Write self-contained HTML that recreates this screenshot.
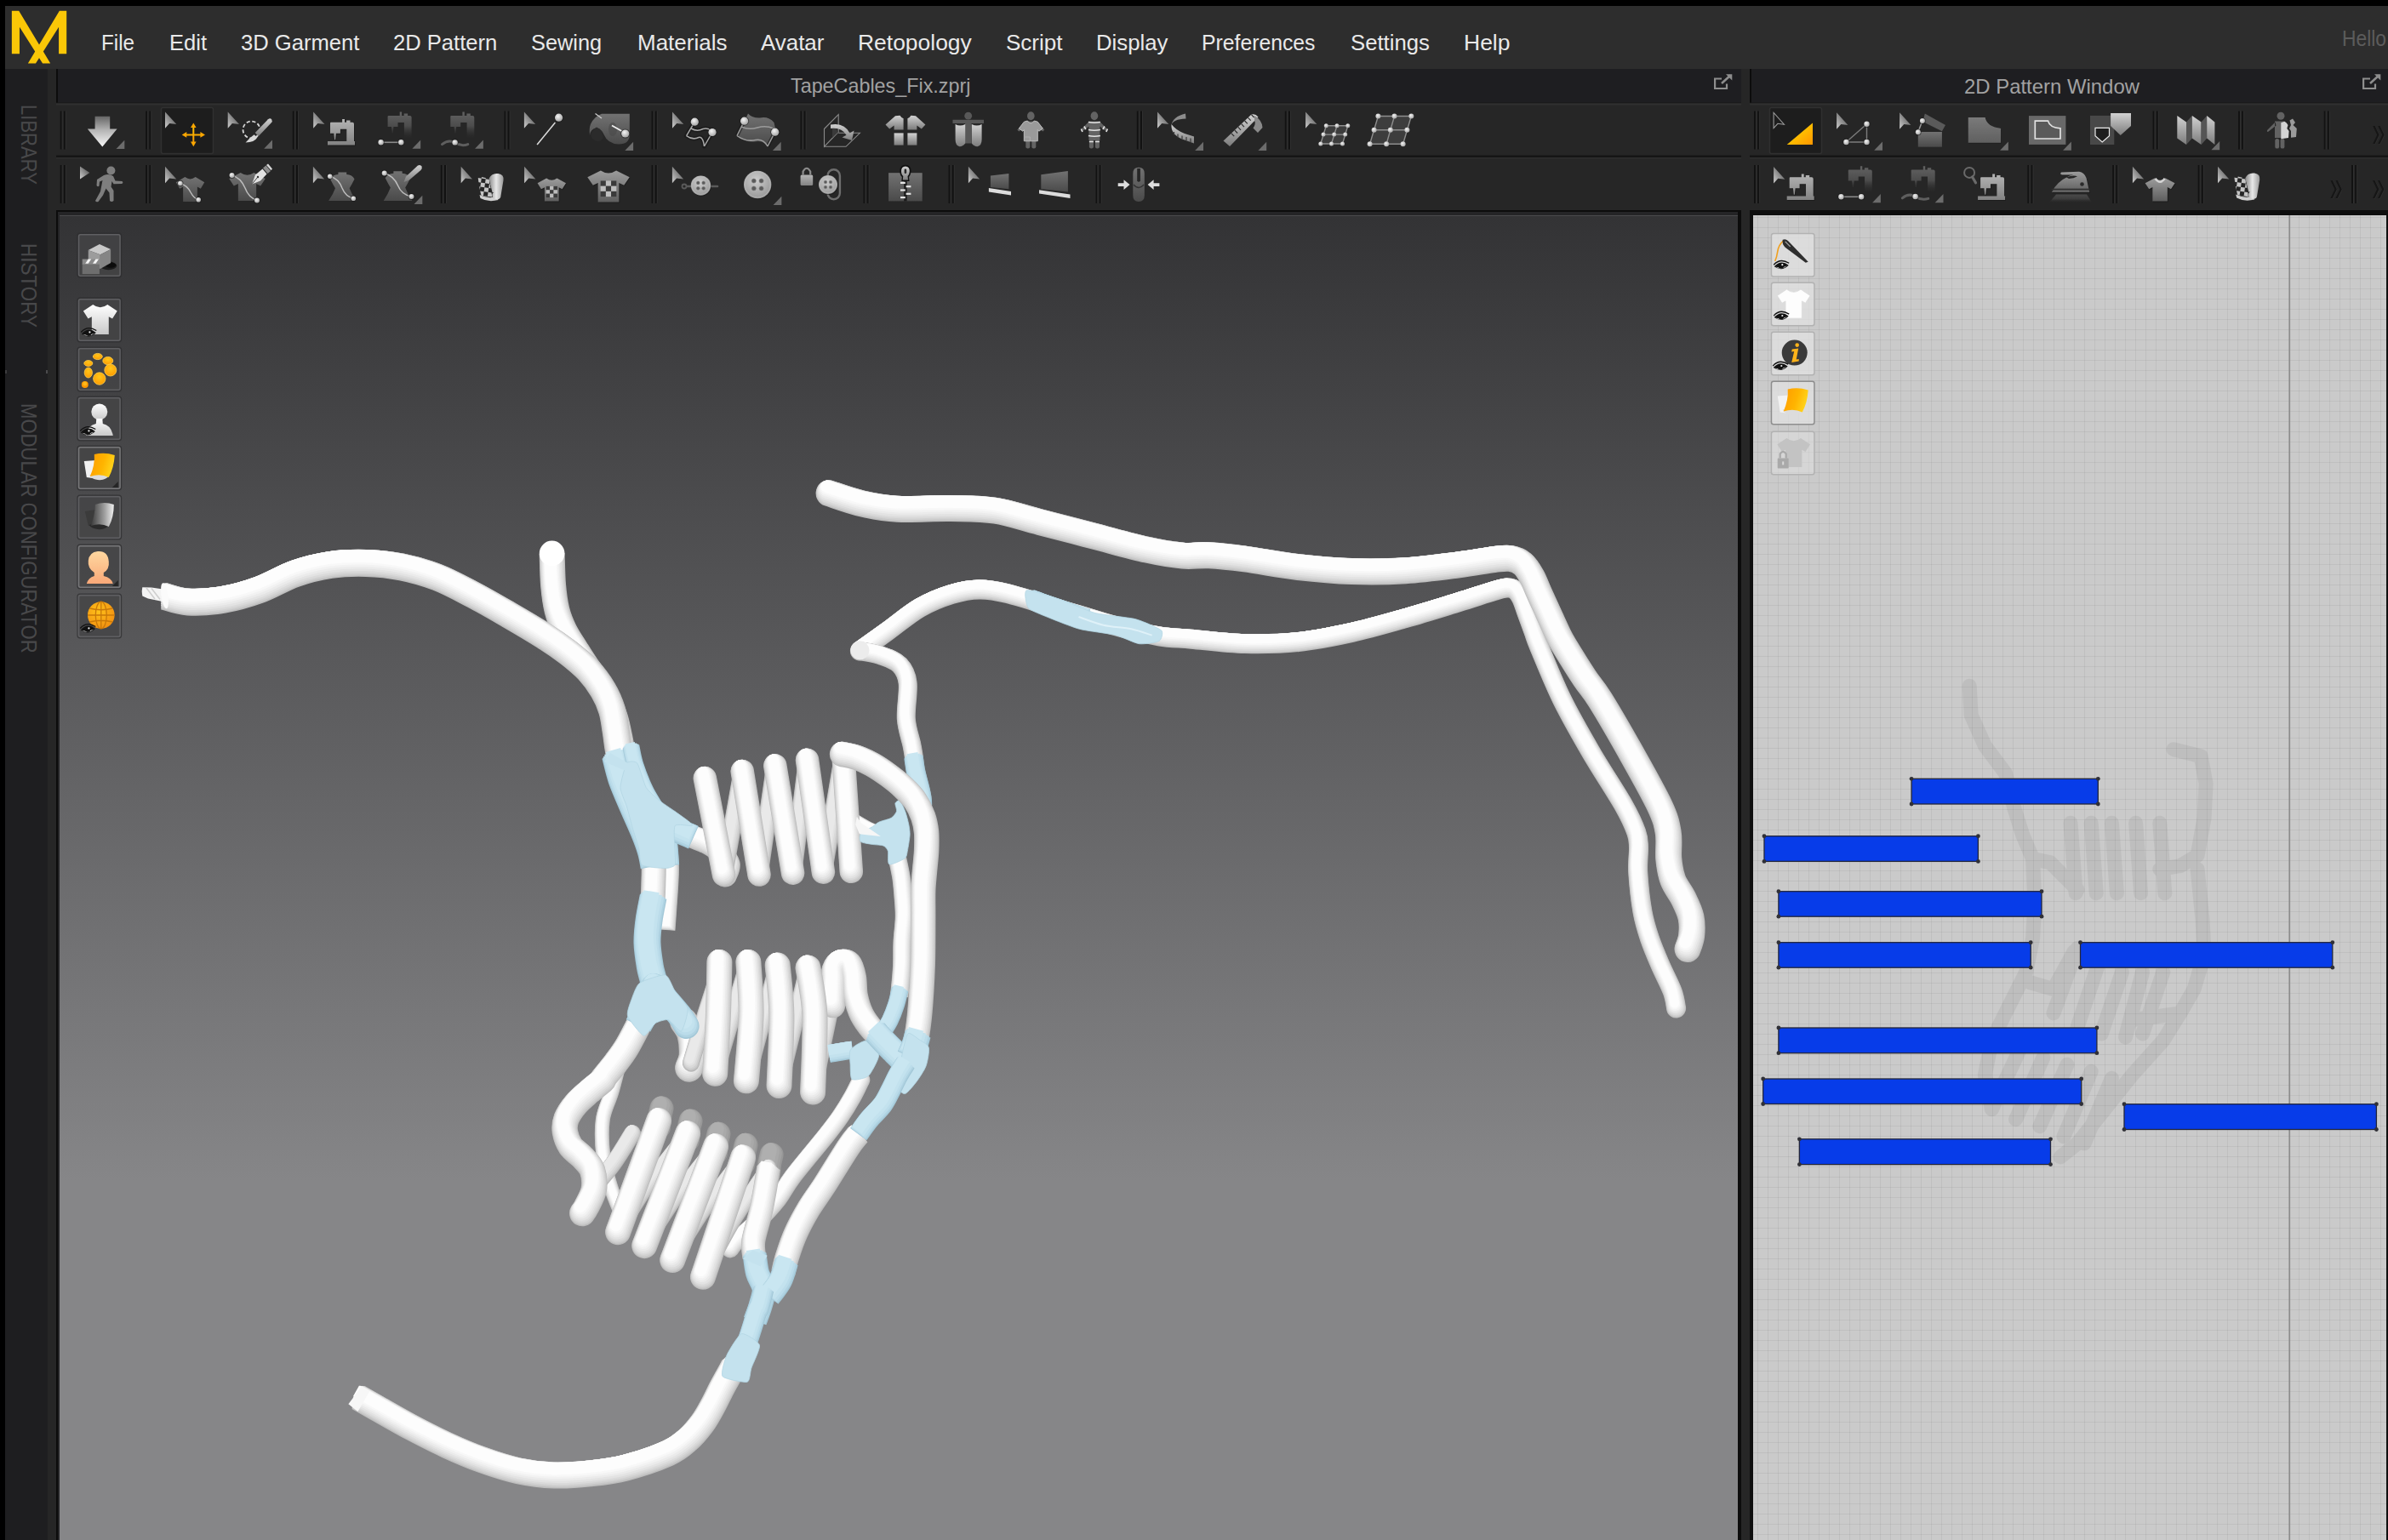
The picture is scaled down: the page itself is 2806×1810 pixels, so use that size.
<!DOCTYPE html>
<html>
<head>
<meta charset="utf-8">
<title>Marvelous Designer</title>
<style>
html,body{margin:0;padding:0;background:#000;}
body{width:2806px;height:1810px;position:relative;overflow:hidden;font-family:"Liberation Sans",sans-serif;}
.abs{position:absolute;}
#menubar{left:6px;top:7px;width:2800px;height:74px;background:#2d2d2d;}
#main{left:6px;top:81px;width:2800px;height:1729px;background:#262626;}
#sidebar{left:6px;top:81px;width:50px;height:1729px;background:#1e1e20;}
.title{background:#1e1e21;height:40px;top:81px;}
#title3d{left:66px;width:1980px;border-left:2px solid #0c0c0c;box-sizing:border-box;}
#title2d{left:2056px;width:750px;border-left:2px solid #0c0c0c;box-sizing:border-box;}
.tbline{height:2px;background:#141414;}
.tbhl{height:2px;background:#2e2e2e;}
.t{position:absolute;white-space:nowrap;transform-origin:0 0;line-height:1;}
.menu{color:#e9e9e9;font-size:25px;top:35px;}
.vt{color:#48484a;font-size:26px;transform-origin:0 0;}
#vp3d{left:66px;top:247px;width:1980px;height:1563px;background:#0c0c0c;}
#vp3dm{left:68px;top:249px;width:1974px;height:1561px;background:#242426;}
#vp3din{left:70px;top:253px;width:1972px;height:1557px;background:linear-gradient(180deg,#4a4a4c 0px,#4a4a4c 1.3px,#333335 1.4px,#868688 1136px,#868688 1557px);}
#vp2d{left:2056px;top:247px;width:750px;height:1563px;background:#0e0e0e;}
#vp2din{left:2060px;top:253px;width:744px;height:1557px;background-color:#cacaca;
 background-image:linear-gradient(90deg,rgba(0,0,0,0.055) 1px,transparent 1px),linear-gradient(180deg,rgba(0,0,0,0.055) 1px,transparent 1px);
 background-size:12px 12px;background-position:5px 2px;}
svg{position:absolute;left:0;top:0;}
</style>
</head>
<body>
<div class="abs" id="menubar"></div>
<div class="abs" id="main"></div>
<div class="abs" id="sidebar"></div>
<div class="abs title" id="title3d"></div>
<div class="abs title" id="title2d"></div>
<div class="abs" id="vp3d"></div>
<div class="abs" id="vp3dm"></div>
<div class="abs" id="vp3din"></div>
<div class="abs" id="vp2d"></div>
<div class="abs" id="vp2din"></div>

<!--TEXT-->
<div class="t menu" style="left:118.9px;top:37.5px;transform:scaleX(0.9702)">File</div>
<div class="t menu" style="left:198.7px;top:37.5px;transform:scaleX(1.0211)">Edit</div>
<div class="t menu" style="left:282.7px;top:37.5px;transform:scaleX(1.0230)">3D Garment</div>
<div class="t menu" style="left:461.7px;top:37.5px;transform:scaleX(1.0233)">2D Pattern</div>
<div class="t menu" style="left:624.2px;top:37.5px;transform:scaleX(1.0146)">Sewing</div>
<div class="t menu" style="left:748.6px;top:37.5px;transform:scaleX(1.0392)">Materials</div>
<div class="t menu" style="left:893.9px;top:37.5px;transform:scaleX(1.0361)">Avatar</div>
<div class="t menu" style="left:1008.2px;top:37.5px;transform:scaleX(1.0579)">Retopology</div>
<div class="t menu" style="left:1182.0px;top:37.5px;transform:scaleX(1.0407)">Script</div>
<div class="t menu" style="left:1288.0px;top:37.5px;transform:scaleX(1.0295)">Display</div>
<div class="t menu" style="left:1412.3px;top:37.5px;transform:scaleX(0.9904)">Preferences</div>
<div class="t menu" style="left:1586.5px;top:37.5px;transform:scaleX(1.0283)">Settings</div>
<div class="t menu" style="left:1720.0px;top:37.5px;transform:scaleX(1.0599)">Help</div>
<div class="t" style="left:2752.3px;top:32.8px;font-size:25px;color:#5c5c5c;transform:scaleX(0.9126)">Hello</div>
<div class="t" style="left:929.3px;top:89.3px;font-size:24px;color:#a2a2a2;transform:scaleX(0.9722)">TapeCables_Fix.zprj</div>
<div class="t" style="left:2307.6px;top:89.8px;font-size:24px;color:#a2a2a2;transform:scaleX(0.9963)">2D Pattern Window</div>
<div class="t vt" style="left:46.8px;top:122.5px;transform:rotate(90deg) scaleX(0.8484)">LIBRARY</div>
<div class="t vt" style="left:46.8px;top:286.2px;transform:rotate(90deg) scaleX(0.8627)">HISTORY</div>
<div class="t vt" style="left:46.8px;top:474.3px;transform:rotate(90deg) scaleX(0.8495)">MODULAR CONFIGURATOR</div>
<!--/TEXT-->

<svg id="ov" width="2806" height="1810" viewBox="0 0 2806 1810">
<defs>
<linearGradient id="gIco" x1="0" y1="0" x2="0" y2="1"><stop offset="0" stop-color="#5a5a5a"/><stop offset="1" stop-color="#b8b8b8"/></linearGradient>
</defs>
<!--CHROME-->
<rect x="66" y="120.5" width="1980" height="1" fill="#171717" />
<rect x="66" y="121.5" width="1980" height="2" fill="#303030" />
<rect x="66" y="182.5" width="1980" height="2.5" fill="#151515" />
<rect x="66" y="185" width="1980" height="1.5" fill="#2e2e2e" />
<rect x="2056" y="120.5" width="750" height="1" fill="#171717" />
<rect x="2056" y="121.5" width="750" height="2" fill="#303030" />
<rect x="2056" y="182.5" width="750" height="2.5" fill="#151515" />
<rect x="2056" y="185" width="750" height="1.5" fill="#2e2e2e" />
<rect x="70.7" y="130.5" width="2" height="45.0" fill="#121212" />
<rect x="72.7" y="130.5" width="1" height="45.0" fill="#303030" />
<rect x="74.9" y="130.5" width="2" height="45.0" fill="#121212" />
<rect x="76.9" y="130.5" width="1" height="45.0" fill="#303030" />
<rect x="171.2" y="130.5" width="2" height="45.0" fill="#121212" />
<rect x="173.2" y="130.5" width="1" height="45.0" fill="#303030" />
<rect x="175.39999999999998" y="130.5" width="2" height="45.0" fill="#121212" />
<rect x="177.39999999999998" y="130.5" width="1" height="45.0" fill="#303030" />
<rect x="343.8" y="130.5" width="2" height="45.0" fill="#121212" />
<rect x="345.8" y="130.5" width="1" height="45.0" fill="#303030" />
<rect x="348.0" y="130.5" width="2" height="45.0" fill="#121212" />
<rect x="350.0" y="130.5" width="1" height="45.0" fill="#303030" />
<rect x="592.5" y="130.5" width="2" height="45.0" fill="#121212" />
<rect x="594.5" y="130.5" width="1" height="45.0" fill="#303030" />
<rect x="596.7" y="130.5" width="2" height="45.0" fill="#121212" />
<rect x="598.7" y="130.5" width="1" height="45.0" fill="#303030" />
<rect x="765.6" y="130.5" width="2" height="45.0" fill="#121212" />
<rect x="767.6" y="130.5" width="1" height="45.0" fill="#303030" />
<rect x="769.8000000000001" y="130.5" width="2" height="45.0" fill="#121212" />
<rect x="771.8000000000001" y="130.5" width="1" height="45.0" fill="#303030" />
<rect x="940.5" y="130.5" width="2" height="45.0" fill="#121212" />
<rect x="942.5" y="130.5" width="1" height="45.0" fill="#303030" />
<rect x="944.7" y="130.5" width="2" height="45.0" fill="#121212" />
<rect x="946.7" y="130.5" width="1" height="45.0" fill="#303030" />
<rect x="1335.8" y="130.5" width="2" height="45.0" fill="#121212" />
<rect x="1337.8" y="130.5" width="1" height="45.0" fill="#303030" />
<rect x="1340.0" y="130.5" width="2" height="45.0" fill="#121212" />
<rect x="1342.0" y="130.5" width="1" height="45.0" fill="#303030" />
<rect x="1509.8" y="130.5" width="2" height="45.0" fill="#121212" />
<rect x="1511.8" y="130.5" width="1" height="45.0" fill="#303030" />
<rect x="1514.0" y="130.5" width="2" height="45.0" fill="#121212" />
<rect x="1516.0" y="130.5" width="1" height="45.0" fill="#303030" />
<rect x="70.7" y="194" width="2" height="45" fill="#121212" />
<rect x="72.7" y="194" width="1" height="45" fill="#303030" />
<rect x="74.9" y="194" width="2" height="45" fill="#121212" />
<rect x="76.9" y="194" width="1" height="45" fill="#303030" />
<rect x="171.2" y="194" width="2" height="45" fill="#121212" />
<rect x="173.2" y="194" width="1" height="45" fill="#303030" />
<rect x="175.39999999999998" y="194" width="2" height="45" fill="#121212" />
<rect x="177.39999999999998" y="194" width="1" height="45" fill="#303030" />
<rect x="343.8" y="194" width="2" height="45" fill="#121212" />
<rect x="345.8" y="194" width="1" height="45" fill="#303030" />
<rect x="348.0" y="194" width="2" height="45" fill="#121212" />
<rect x="350.0" y="194" width="1" height="45" fill="#303030" />
<rect x="517.8" y="194" width="2" height="45" fill="#121212" />
<rect x="519.8" y="194" width="1" height="45" fill="#303030" />
<rect x="522.0" y="194" width="2" height="45" fill="#121212" />
<rect x="524.0" y="194" width="1" height="45" fill="#303030" />
<rect x="765.6" y="194" width="2" height="45" fill="#121212" />
<rect x="767.6" y="194" width="1" height="45" fill="#303030" />
<rect x="769.8000000000001" y="194" width="2" height="45" fill="#121212" />
<rect x="771.8000000000001" y="194" width="1" height="45" fill="#303030" />
<rect x="1014.5" y="194" width="2" height="45" fill="#121212" />
<rect x="1016.5" y="194" width="1" height="45" fill="#303030" />
<rect x="1018.7" y="194" width="2" height="45" fill="#121212" />
<rect x="1020.7" y="194" width="1" height="45" fill="#303030" />
<rect x="1114.6" y="194" width="2" height="45" fill="#121212" />
<rect x="1116.6" y="194" width="1" height="45" fill="#303030" />
<rect x="1118.8" y="194" width="2" height="45" fill="#121212" />
<rect x="1120.8" y="194" width="1" height="45" fill="#303030" />
<rect x="1287.5" y="194" width="2" height="45" fill="#121212" />
<rect x="1289.5" y="194" width="1" height="45" fill="#303030" />
<rect x="1291.7" y="194" width="2" height="45" fill="#121212" />
<rect x="1293.7" y="194" width="1" height="45" fill="#303030" />
<rect x="2061" y="130.5" width="2" height="45.0" fill="#121212" />
<rect x="2063" y="130.5" width="1" height="45.0" fill="#303030" />
<rect x="2065.2" y="130.5" width="2" height="45.0" fill="#121212" />
<rect x="2067.2" y="130.5" width="1" height="45.0" fill="#303030" />
<rect x="2529.6" y="130.5" width="2" height="45.0" fill="#121212" />
<rect x="2531.6" y="130.5" width="1" height="45.0" fill="#303030" />
<rect x="2533.7999999999997" y="130.5" width="2" height="45.0" fill="#121212" />
<rect x="2535.7999999999997" y="130.5" width="1" height="45.0" fill="#303030" />
<rect x="2630" y="130.5" width="2" height="45.0" fill="#121212" />
<rect x="2632" y="130.5" width="1" height="45.0" fill="#303030" />
<rect x="2634.2" y="130.5" width="2" height="45.0" fill="#121212" />
<rect x="2636.2" y="130.5" width="1" height="45.0" fill="#303030" />
<rect x="2730.7" y="130.5" width="2" height="45.0" fill="#121212" />
<rect x="2732.7" y="130.5" width="1" height="45.0" fill="#303030" />
<rect x="2734.8999999999996" y="130.5" width="2" height="45.0" fill="#121212" />
<rect x="2736.8999999999996" y="130.5" width="1" height="45.0" fill="#303030" />
<rect x="2061" y="194" width="2" height="45" fill="#121212" />
<rect x="2063" y="194" width="1" height="45" fill="#303030" />
<rect x="2065.2" y="194" width="2" height="45" fill="#121212" />
<rect x="2067.2" y="194" width="1" height="45" fill="#303030" />
<rect x="2382.4" y="194" width="2" height="45" fill="#121212" />
<rect x="2384.4" y="194" width="1" height="45" fill="#303030" />
<rect x="2386.6" y="194" width="2" height="45" fill="#121212" />
<rect x="2388.6" y="194" width="1" height="45" fill="#303030" />
<rect x="2482.2" y="194" width="2" height="45" fill="#121212" />
<rect x="2484.2" y="194" width="1" height="45" fill="#303030" />
<rect x="2486.3999999999996" y="194" width="2" height="45" fill="#121212" />
<rect x="2488.3999999999996" y="194" width="1" height="45" fill="#303030" />
<rect x="2582.7" y="194" width="2" height="45" fill="#121212" />
<rect x="2584.7" y="194" width="1" height="45" fill="#303030" />
<rect x="2586.8999999999996" y="194" width="2" height="45" fill="#121212" />
<rect x="2588.8999999999996" y="194" width="1" height="45" fill="#303030" />
<rect x="2763" y="194" width="2" height="45" fill="#121212" />
<rect x="2765" y="194" width="1" height="45" fill="#303030" />
<rect x="2767.2" y="194" width="2" height="45" fill="#121212" />
<rect x="2769.2" y="194" width="1" height="45" fill="#303030" />
<rect x="189.5" y="126.5" width="61" height="54" rx="2" fill="#1d1d1d" stroke="#303030" stroke-width="1.5"/>
<rect x="2079.5" y="126.5" width="61" height="54" rx="2" fill="#1d1d1d" stroke="#303030" stroke-width="1.5"/>
<rect x="6" y="435" width="2" height="4" fill="#3c3c3e" />
<rect x="54" y="435" width="2" height="4" fill="#4a4a4c" />
<!--/CHROME-->
<!--LOGO--><path fill="#fbc707" d="M13.85,12.83 L22.2,12.83 L59.2,74.6 L50.07,74.6 L22.97,31.8 L22.97,63.2 L13.85,63.2Z"/><path fill="#fbc707" d="M78.2,12.83 L69.83,12.83 L32.85,74.6 L41.97,74.6 L69.07,31.8 L69.07,63.2 L78.2,63.2Z"/><g id="pop" fill="none" stroke="#8e8e8e" stroke-width="2.2"><path d="M2785,92.5 L2777.1,92.5 L2777.1,104 L2791,104 L2791,98.5"/><path d="M2785,98 L2795.5,88.5" stroke-width="2.6"/><path d="M2790,87.3 L2797.3,87.3 L2797.3,94.6Z" fill="#8e8e8e" stroke="none"/></g><use href="#pop" transform="translate(-762,0)"/><!--/LOGO-->
<!--ICONS3D-->
<defs>
<linearGradient id="gCur" x1="0" y1="1" x2="0.9" y2="0.1"><stop offset="0" stop-color="#cfcfcf"/><stop offset="0.55" stop-color="#8a8a8a"/><stop offset="1" stop-color="#4c4c4c"/></linearGradient>
<linearGradient id="gL" x1="0" y1="0" x2="0" y2="1"><stop offset="0" stop-color="#b4b4b4"/><stop offset="1" stop-color="#828282"/></linearGradient>
<linearGradient id="gL2" x1="0" y1="0" x2="0" y2="1"><stop offset="0" stop-color="#d2d2d2"/><stop offset="1" stop-color="#7c7c7c"/></linearGradient>
<linearGradient id="gD" x1="0" y1="0" x2="0" y2="1"><stop offset="0" stop-color="#727272"/><stop offset="1" stop-color="#4a4a4a"/></linearGradient>
<linearGradient id="gDf" x1="0" y1="0" x2="0" y2="1"><stop offset="0" stop-color="#626262"/><stop offset="0.55" stop-color="#4c4c4c"/><stop offset="1" stop-color="#2a2a2a" stop-opacity="0.2"/></linearGradient>
<linearGradient id="gArr" x1="0" y1="0" x2="0" y2="1"><stop offset="0" stop-color="#666"/><stop offset="0.45" stop-color="#b4b4b4"/><stop offset="1" stop-color="#f8f8f8"/></linearGradient>
<linearGradient id="gM" x1="0" y1="0" x2="0" y2="1"><stop offset="0" stop-color="#9c9c9c"/><stop offset="1" stop-color="#5e5e5e"/></linearGradient>
<radialGradient id="gBtn" cx="0.45" cy="0.35" r="0.8"><stop offset="0" stop-color="#cdcdcd"/><stop offset="1" stop-color="#8c8c8c"/></radialGradient>
<radialGradient id="gBall" cx="0.4" cy="0.35" r="0.75"><stop offset="0" stop-color="#f4f4f4"/><stop offset="1" stop-color="#9c9c9c"/></radialGradient>
<linearGradient id="gYel" x1="0.2" y1="0.2" x2="1" y2="1"><stop offset="0" stop-color="#ffd500"/><stop offset="1" stop-color="#ff9600"/></linearGradient>
<linearGradient id="gMv" x1="0" y1="0" x2="0" y2="1"><stop offset="0" stop-color="#ffc400"/><stop offset="1" stop-color="#f79400"/></linearGradient>
<linearGradient id="gRoll" x1="0" y1="0" x2="1" y2="0"><stop offset="0" stop-color="#8a8a8a"/><stop offset="0.5" stop-color="#e8e8e8"/><stop offset="1" stop-color="#9a9a9a"/></linearGradient>
<pattern id="chk" width="10" height="10" patternUnits="userSpaceOnUse" patternTransform="rotate(8)"><rect width="10" height="10" fill="#c4c4c4"/><rect width="5" height="5" fill="#262626"/><rect x="5" y="5" width="5" height="5" fill="#262626"/></pattern>
<pattern id="chk2" width="9" height="9" patternUnits="userSpaceOnUse"><rect width="9" height="9" fill="#b8b8b8"/><rect width="4.5" height="4.5" fill="#484848"/><rect x="4.5" y="4.5" width="4.5" height="4.5" fill="#484848"/></pattern>
<path id="cur" d="M0,0 L0,19.4 L5.2,13.7 L13.3,14.7Z" fill="url(#gCur)"/>
<path id="tri" d="M0,-10.2 L0,0 L-9.8,0Z" fill="#6c6c6c"/>
<path id="sm" d="M1.5,0 H26.5 Q28.5,0 28.5,2 V22.3 H29.5 V26.8 H-2.5 V22.3 H19.8 V8 H12.4 V13 H7.4 L6.6,20.5 H5.6 L4.8,13 H0.5 V1 Q0.5,0 1.5,0Z M14.6,-3.8 h2.9 v3.8 h-2.9Z M19.6,-2.3 h4.4 v2.3 h-4.4Z"/>
<path id="smd" d="M1.5,0 H26.5 Q28.5,0 28.5,2 V26 H19.8 V8 H12.4 V13 H7.4 L6.6,20.5 H5.6 L4.8,13 H0.5 V1 Q0.5,0 1.5,0Z M14.6,-4.3 h2.4 v4.3 h-2.4Z M19.6,-2.3 h4.4 v2.3 h-4.4Z" fill="url(#gDf)"/>
<path id="tee2" d="M-7,-17 Q0,-11.5 7,-17 L19,-10 L14,-1.5 L9.5,-4 L9.5,16 L-9.5,16 L-9.5,-4 L-14,-1.5 L-19,-10Z"/>
<path id="chev" d="M0,0 L2.4,0 L7.4,10.5 L2.4,21 L0,21 L5,10.5Z"/>
</defs>
<path d="M111.6,136.8 H129.2 V151.4 H137.6 L120.3,172.6 L102.8,151.4 H111.6Z" fill="url(#gArr)"/>
<use href="#tri" x="146.3" y="174.9"/>
<use href="#cur" x="194" y="131.4"/>
<g stroke="url(#gMv)" stroke-width="2" fill="url(#gMv)"><path d="M227.3,148 V169 M217,158.4 H237.6" /><path d="M227.3,144.4 L230.6,150 H224Z M227.3,172.2 L230.6,166.6 H224Z M213.7,158.4 L219.3,155.1 V161.7Z M241,158.4 L235.4,155.1 V161.7Z" stroke="none" fill="#f9a602"/></g>
<use href="#cur" x="267.7" y="131.4"/>
<circle cx="295.5" cy="152.5" r="10" fill="none" stroke="#d8d8d8" stroke-width="1.8" stroke-dasharray="4.2 2.6"/>
<path d="M299.8,156 L315,140.2 Q317.6,138.4 319.2,140.4 Q320.6,142.4 318.6,144.6 L303.6,160.2Z" fill="url(#gL2)"/><path d="M298.6,158.2 L302.4,161.6 Q299,167.4 288.6,167.6 Q293.2,161.8 298.6,158.2Z" fill="#d6d6d6"/>
<use href="#tri" x="320" y="174.8"/>
<use href="#cur" x="368.2" y="131.4"/>
<use href="#sm" x="388.3" y="144.7" fill="#111" opacity="0.5"/><use href="#sm" x="387.5" y="143.7" fill="url(#gL)"/>
<use href="#smd" x="455.1" y="135.9"/>
<path d="M447.6,167.3 H471.3" stroke="#8a8a8a" stroke-width="1.6"/>
<circle cx="447.6" cy="167.3" r="4.1000000000000005" fill="#151515" opacity="0.55"/><circle cx="447.6" cy="167.3" r="3.2" fill="url(#gBall)"/>
<circle cx="471.3" cy="167.3" r="4.1000000000000005" fill="#151515" opacity="0.55"/><circle cx="471.3" cy="167.3" r="3.2" fill="url(#gBall)"/>
<use href="#tri" x="494.2" y="174.8"/>
<use href="#smd" x="528.8" y="135.9"/>
<path d="M519.5,169.6 Q527,163.5 534.6,167.6 Q542,172.5 549.8,169.6" stroke="#5e5e5e" stroke-width="3" fill="none" stroke-linecap="round"/>
<circle cx="534.6" cy="167.4" r="4.1000000000000005" fill="#151515" opacity="0.55"/><circle cx="534.6" cy="167.4" r="3.2" fill="url(#gBall)"/>
<use href="#tri" x="567.9" y="174.8"/>
<use href="#cur" x="615.9" y="131.4"/>
<path d="M652.4,144 L631.1,170" stroke="#dcdcdc" stroke-width="1.5"/>
<circle cx="656.6" cy="138.2" r="5.5" fill="#151515" opacity="0.55"/><circle cx="656.6" cy="138.2" r="4.6" fill="url(#gBall)"/>
<path d="M707,133.8 H739.8 V158 Q739.8,169.5 727,169.5 Q714,169 709.5,158 Q706,150 700,150.5 Q694,151.5 693,159 Q692,151 694,146 Q698,137 707,133.8Z" fill="url(#gD)"/><path d="M701,149.5 Q708,152 709,162 Q703,170 696,163 Q691,157 701,149.5Z" fill="#2b2b2b"/><ellipse cx="720" cy="152" rx="5" ry="8" fill="#4a4a4a" opacity="0.6"/>
<path d="M699.5,133.5 L707,139" stroke="#cfcfcf" stroke-width="1.2"/><path d="M719,147.5 L730.5,154" stroke="#f0f0f0" stroke-width="1.8"/>
<circle cx="734.7" cy="157" r="5.5" fill="#151515" opacity="0.55"/><circle cx="734.7" cy="157" r="4.6" fill="url(#gBall)"/>
<use href="#tri" x="744.1" y="176.9"/>
<use href="#cur" x="790" y="131.4"/>
<g fill="none" stroke="#151515" stroke-width="5" stroke-linecap="round" opacity="0.6"><path d="M816.3,143.2 L806.6,159.6 M837,155.5 L827.5,172 M812,151 Q819,155 826,151.5 Q831,150 835,153 M806.6,159.6 Q814,165 821,161.5 Q826,160 827.5,172"/></g>
<g fill="none" stroke="#a8a8a8" stroke-width="1.5"><path d="M816.3,143.2 L806.6,159.6 M837,155.5 L827.5,172 M812,151 Q819,155 826,151.5 Q831,150 835,153 M806.6,159.6 Q814,165 821,161.5 Q826,160 827.5,172"/></g>
<circle cx="816.3" cy="143.2" r="5.5" fill="#151515" opacity="0.55"/><circle cx="816.3" cy="143.2" r="4.6" fill="url(#gBall)"/>
<circle cx="837" cy="155.5" r="5.5" fill="#151515" opacity="0.55"/><circle cx="837" cy="155.5" r="4.6" fill="url(#gBall)"/>
<path d="M879,133.5 Q884,139 893,138.5 Q903,136.5 909.5,144 L912,155 L902,172 Q897,165 888,166.5 Q876,168 866,159.5 L874.6,143Z" fill="url(#gD)"/>
<g fill="none" stroke="#151515" stroke-width="4.5" opacity="0.55"><path d="M874.6,142.2 L866,159.5 M910.7,155.2 L902,172"/></g>
<g fill="none" stroke="#9c9c9c" stroke-width="1.5"><path d="M874.6,142.2 L866,159.5 M910.7,155.2 L902,172 M871,149 Q880,153 890,150 Q900,147 909,151 M866,159.5 Q876,167 888,164.5 Q897,163 902,172"/></g>
<circle cx="874.6" cy="142.2" r="5.5" fill="#151515" opacity="0.55"/><circle cx="874.6" cy="142.2" r="4.6" fill="url(#gBall)"/>
<circle cx="910.7" cy="155.2" r="5.5" fill="#151515" opacity="0.55"/><circle cx="910.7" cy="155.2" r="4.6" fill="url(#gBall)"/>
<use href="#tri" x="917.7" y="176.9"/>
<g fill="none" stroke="#8a8a8a" stroke-width="1.1"><path d="M968.5,151.5 L985.2,134.6 V155 L968.5,172.3Z M968.5,172.3 H994 L1010.4,156.3 H985.2"/></g><path d="M985.2,155 L978,162 V147 Z" fill="#3a3a3a"/>
<path d="M976,146.5 Q992,143.5 998.5,156.5 L1003.5,153.5 L1001,165 L989.5,161.5 L994.5,158.7 Q989,149.5 976,151Z" fill="url(#gL2)"/>
<g fill="url(#gL2)"><path d="M1057.5,135.8 Q1059,138.5 1061.6,139.2 V152.4 H1050.6 V147.6 L1045.2,151.6 L1040.5,146.6 L1052,136.2Z"/><path d="M1070.4,135.8 Q1069,138.5 1066.4,139.2 V152.4 H1077.4 V147.6 L1082.8,151.6 L1087.4,146.6 L1076,136.2Z"/><rect x="1050.6" y="156.4" width="11" height="14.2"/><rect x="1066.4" y="156.4" width="11" height="14.2"/></g>
<g fill="#585858"><circle cx="1137.7" cy="136.2" r="4.4"/><path d="M1119.5,140.7 H1156 V145 H1141.5 V168.5 H1134 V145 H1119.5Z"/></g>
<path d="M1122.6,146 Q1128,149 1134.2,146 V168.5 Q1131,172.5 1127.5,172.3 Q1122.6,171 1122.6,164Z" fill="url(#gL2)"/><path d="M1153.6,146 Q1148,149 1141.8,146 V168.5 Q1145,172.5 1148.5,172.3 Q1153.6,171 1153.6,164Z" fill="url(#gL2)"/>
<g fill="#636363"><ellipse cx="1211.3" cy="136.3" rx="4.3" ry="5"/><path d="M1205.3,142.5 H1217.3 L1227.3,152.5 L1225.3,154.5 L1217.8,148.5 V165 H1204.8 V148.5 L1197.3,154.5 L1195.3,152.5Z"/><rect x="1205.3" y="164" width="5" height="10.5" rx="2.2"/><rect x="1212.3" y="164" width="5" height="10.5" rx="2.2"/></g>
<path d="M1207.3,142 Q1211.3,147.5 1215.3,142 L1219.3,143.2 L1225.3,151 L1220.8,154.2 L1219.3,152.5 V165.8 H1203.3 V152.5 L1201.8,154.2 L1197.3,151 L1203.3,143.2Z" fill="#9a9a9a" stroke="#c6c6c6" stroke-width="0.9"/><path d="M1204.3,161 H1210.3 V165.5" fill="none" stroke="#b8b8b8" stroke-width="0.7"/>
<g fill="#636363"><ellipse cx="1285.9" cy="136.3" rx="4.3" ry="5"/><path d="M1279.9,142.5 H1291.9 L1301.9,152.5 L1299.9,154.5 L1292.4,148.5 V165 H1279.4 V148.5 L1271.9,154.5 L1269.9,152.5Z"/><rect x="1279.9" y="164" width="5" height="10.5" rx="2.2"/><rect x="1286.9" y="164" width="5" height="10.5" rx="2.2"/></g>
<path d="M1278.9,143.5 Q1285.9,145.1 1292.9,143.5" stroke="#e4e4e4" stroke-width="1.6" fill="none"/><path d="M1278.9,152.5 Q1285.9,154.1 1292.9,152.5" stroke="#e4e4e4" stroke-width="1.6" fill="none"/><path d="M1278.9,159.5 Q1285.9,161.1 1292.9,159.5" stroke="#e4e4e4" stroke-width="1.6" fill="none"/><path d="M1273.9,148.5 L1275.9,152 M1297.9,148.5 L1295.9,152 M1270.4,151.5 L1271.9,155 M1301.4,151.5 L1299.9,155 M1279.9,166.5 H1284.9 M1286.9,166.5 H1291.9" stroke="#e4e4e4" stroke-width="1.6" fill="none"/>
<use href="#cur" x="1360" y="131.4"/>
<path d="M1393,133.5 Q1378,137 1376.5,147 Q1378,140 1393.5,139.5Z" fill="#8c8c8c"/><path d="M1376.5,146 Q1375.5,158 1389,163.5 L1403,168.5 V160.5 L1392,157 Q1381,152.5 1376.5,146Z" fill="url(#gL2)"/><path d="M1379.5,155 v3.5 M1384,157.5 v4 M1389,159.5 v4 M1394,161 v4 M1399,162.5 v4.5" stroke="#3a3a3a" stroke-width="1.2"/>
<use href="#tri" x="1414" y="176.9"/>
<path d="M1437.5,165.5 L1470.5,134.5 Q1475,133 1478.5,137.5 L1445,172Z" fill="url(#gL2)"/><path d="M1474,136 Q1483,141 1483.5,150 L1478,156 L1472.5,150.5 Q1476,146 1474,141.5Z" fill="#8a8a8a"/>
<g stroke="#2c2c2c" stroke-width="1.2"><path d="M1447.0,156.8 l3.2,3.4"/><path d="M1450.9,153.1 l3.2,3.4"/><path d="M1454.8,149.4 l3.2,3.4"/><path d="M1458.7,145.7 l3.2,3.4"/><path d="M1462.6,142.0 l3.2,3.4"/><path d="M1466.5,138.3 l3.2,3.4"/><path d="M1470.4,134.6 l3.2,3.4"/></g>
<use href="#tri" x="1488.2" y="176.9"/>
<use href="#cur" x="1534.1" y="131.4"/>
<path d="M1558.3,147.7 L1583.8,147.7 L1577.5,169 L1551.8,169Z" fill="#3d3d3d"/>
<path d="M1558.3,147.7 L1583.8,147.7 M1558.3,147.7 L1551.8,169 M1555,158.1 L1580.7,158.1 M1571,147.7 L1564.5,169 M1551.8,169 L1577.5,169 M1583.8,147.7 L1577.5,169 " stroke="#8e8e8e" stroke-width="1.4" fill="none"/>
<circle cx="1558.3" cy="147.7" r="2.5" fill="url(#gBall)"/>
<circle cx="1571" cy="147.7" r="2.5" fill="url(#gBall)"/>
<circle cx="1583.8" cy="147.7" r="2.5" fill="url(#gBall)"/>
<circle cx="1555" cy="158.1" r="2.5" fill="url(#gBall)"/>
<circle cx="1567.7" cy="158.1" r="2.5" fill="url(#gBall)"/>
<circle cx="1580.7" cy="158.1" r="2.5" fill="url(#gBall)"/>
<circle cx="1551.8" cy="169" r="2.5" fill="url(#gBall)"/>
<circle cx="1564.5" cy="169" r="2.5" fill="url(#gBall)"/>
<circle cx="1577.5" cy="169" r="2.5" fill="url(#gBall)"/>
<path d="M1619.4,136.5 L1658.3,136.5 L1648.6,169.3 L1609.6,169.3Z" fill="#3d3d3d"/>
<path d="M1619.4,136.5 L1658.3,136.5 M1619.4,136.5 L1609.6,169.3 M1614.6,152.8 L1653.4,152.8 M1638.5,136.5 L1629.1,169.3 M1609.6,169.3 L1648.6,169.3 M1658.3,136.5 L1648.6,169.3 " stroke="#8e8e8e" stroke-width="1.4" fill="none"/>
<circle cx="1619.4" cy="136.5" r="3" fill="url(#gBall)"/>
<circle cx="1638.5" cy="136.5" r="3" fill="url(#gBall)"/>
<circle cx="1658.3" cy="136.5" r="3" fill="url(#gBall)"/>
<circle cx="1614.6" cy="152.8" r="3" fill="url(#gBall)"/>
<circle cx="1633.8" cy="152.8" r="3" fill="url(#gBall)"/>
<circle cx="1653.4" cy="152.8" r="3" fill="url(#gBall)"/>
<circle cx="1609.6" cy="169.3" r="3" fill="url(#gBall)"/>
<circle cx="1629.1" cy="169.3" r="3" fill="url(#gBall)"/>
<circle cx="1648.6" cy="169.3" r="3" fill="url(#gBall)"/>
<path d="M94,195.6 L105.4,203 L94,210.4Z" fill="url(#gCur)"/>
<g fill="#7e7e7e"><circle cx="130.4" cy="200.5" r="5"/><path d="M122,206 Q128,203.5 133,207 L135.5,212.5 L143.5,213 Q145.5,215 143,216 L133.5,216.2 L131.5,213 L130.5,219.5 L133.5,224 L133.5,236 Q131,238 129,236 L128.5,226.5 L124.5,221.5 L121,229.5 L115.5,237 Q113,238 112,236 L118,225 L120.5,212 L117,213.5 L116.5,218.5 Q114.5,220 113.5,218 L114,211Z"/></g>
<use href="#cur" x="194" y="195.8"/>
<g transform="translate(223.5,223)"><use href="#tee2" fill="url(#gD)" transform="scale(0.88)"/></g>
<path d="M211.8,215.5 Q220,218 224,226 Q228,233.5 233.2,234.8" stroke="#bdbdbd" stroke-width="1.5" fill="none"/>
<circle cx="211.8" cy="215.5" r="3.6999999999999997" fill="#151515" opacity="0.55"/><circle cx="211.8" cy="215.5" r="2.8" fill="url(#gBall)"/>
<circle cx="233.2" cy="234.8" r="3.6999999999999997" fill="#151515" opacity="0.55"/><circle cx="233.2" cy="234.8" r="2.8" fill="url(#gBall)"/>
<g transform="translate(290.5,220)"><use href="#tee2" fill="url(#gD)" transform="scale(1.12,1.0)"/></g>
<path d="M272.5,206 Q283,209 288,221 Q292,232 302,235.5" stroke="#bdbdbd" stroke-width="1.5" fill="none"/>
<circle cx="272.5" cy="206" r="3.9" fill="#151515" opacity="0.55"/><circle cx="272.5" cy="206" r="3" fill="url(#gBall)"/>
<circle cx="302" cy="235.5" r="3.9" fill="#151515" opacity="0.55"/><circle cx="302" cy="235.5" r="3" fill="url(#gBall)"/>
<path d="M296,216.5 L300,205.5 L308.5,198.5 L313.5,204.5 L306,212.5Z" fill="#e2e2e2"/><path d="M296,216.5 L302.5,208.5" stroke="#444" stroke-width="1"/><circle cx="303" cy="208" r="1.2" fill="#333"/><path d="M309,197.5 L312.5,194.5 L318,201 L314.5,204Z" fill="#8c8c8c"/><path d="M313,194 L315,192.5 L320,198.5 L318.5,200.2Z" fill="#d8d8d8"/>
<use href="#cur" x="367.9" y="195.8"/>
<g transform="translate(402.3,219.2) scale(0.98)"><path d="M-5,-17 H5 V-14.5 Q12,-14 14.5,-9 Q11,-2 8.5,2 Q11,9 16.5,17.2 H-16.5 Q-11,9 -8.5,2 Q-11,-2 -14.5,-9 Q-12,-14 -5,-14.5Z" fill="url(#gD)"/></g>
<path d="M387.7,207.2 Q398,210 402,221 Q406,231 415.3,233.2" stroke="#bdbdbd" stroke-width="1.5" fill="none"/>
<circle cx="387.7" cy="207.2" r="3.6999999999999997" fill="#151515" opacity="0.55"/><circle cx="387.7" cy="207.2" r="2.8" fill="url(#gBall)"/>
<circle cx="415.3" cy="233.2" r="3.6999999999999997" fill="#151515" opacity="0.55"/><circle cx="415.3" cy="233.2" r="2.8" fill="url(#gBall)"/>
<g transform="translate(467.5,218.5) scale(1.02)"><path d="M-5,-17 H5 V-14.5 Q12,-14 14.5,-9 Q11,-2 8.5,2 Q11,9 16.5,17.2 H-16.5 Q-11,9 -8.5,2 Q-11,-2 -14.5,-9 Q-12,-14 -5,-14.5Z" fill="url(#gD)"/></g>
<path d="M451.7,203.5 Q463,207 467.5,218 Q472,229 483.5,231" stroke="#bdbdbd" stroke-width="1.5" fill="none"/>
<circle cx="451.7" cy="203.5" r="3.9" fill="#151515" opacity="0.55"/><circle cx="451.7" cy="203.5" r="3" fill="url(#gBall)"/>
<circle cx="483.5" cy="231" r="3.9" fill="#151515" opacity="0.55"/><circle cx="483.5" cy="231" r="3" fill="url(#gBall)"/>
<path d="M474.5,214 L477,207.5 L491,194.5 Q494,193 495.5,195.5 Q496.5,198 494.5,200 L481,211.5Z" fill="url(#gL2)"/>
<use href="#tri" x="496.3" y="240"/>
<use href="#cur" x="541.7" y="195.8"/>
<g transform="translate(561.5,204)"><path d="M0,3 L13,6 L17,28 L4,26 Q1,15 0,3Z" fill="url(#chk)"/><path d="M2,25 Q12,30 22,27 L24,31 Q12,34 3,29Z" fill="#cfcfcf"/><path d="M13,6 Q16,-1 24,0 Q31,1 30,8 L27,26 Q27,31 21,30 Q16,29 17,24 Q18,21 22,22 L17,22Z" fill="url(#gRoll)"/></g>
<use href="#cur" x="616.1" y="195.8"/>
<g transform="translate(648.3,223.5)"><use href="#tee2" fill="#111" opacity="0.45" transform="translate(0.8,0.9) scale(0.88,0.82)"/><use href="#tee2" fill="url(#gM)" transform="scale(0.88,0.82)"/><rect x="-6.6" y="-4.6" width="4.4" height="4.4" fill="#3a3a3a"/><rect x="-6.6" y="-0.2" width="4.4" height="4.4" fill="#bdbdbd"/><rect x="-6.6" y="4.2" width="4.4" height="4.4" fill="#3a3a3a"/><rect x="-2.2" y="-4.6" width="4.4" height="4.4" fill="#bdbdbd"/><rect x="-2.2" y="-0.2" width="4.4" height="4.4" fill="#3a3a3a"/><rect x="-2.2" y="4.2" width="4.4" height="4.4" fill="#bdbdbd"/><rect x="2.2" y="-4.6" width="4.4" height="4.4" fill="#3a3a3a"/><rect x="2.2" y="-0.2" width="4.4" height="4.4" fill="#bdbdbd"/><rect x="2.2" y="4.2" width="4.4" height="4.4" fill="#3a3a3a"/></g>
<g transform="translate(715,219.5)"><use href="#tee2" fill="#111" opacity="0.45" transform="translate(0.8,0.9) scale(1.3,1.12)"/><use href="#tee2" fill="url(#gM)" transform="scale(1.3,1.12)"/><rect x="-9.3" y="-7.0" width="6.2" height="6.2" fill="#3a3a3a"/><rect x="-9.3" y="-0.8" width="6.2" height="6.2" fill="#bdbdbd"/><rect x="-9.3" y="5.4" width="6.2" height="6.2" fill="#3a3a3a"/><rect x="-3.1" y="-7.0" width="6.2" height="6.2" fill="#bdbdbd"/><rect x="-3.1" y="-0.8" width="6.2" height="6.2" fill="#3a3a3a"/><rect x="-3.1" y="5.4" width="6.2" height="6.2" fill="#bdbdbd"/><rect x="3.1" y="-7.0" width="6.2" height="6.2" fill="#3a3a3a"/><rect x="3.1" y="-0.8" width="6.2" height="6.2" fill="#bdbdbd"/><rect x="3.1" y="5.4" width="6.2" height="6.2" fill="#3a3a3a"/></g>
<use href="#cur" x="789.9" y="195.8"/>
<path d="M805,219 H843" stroke="#5a5a5a" stroke-width="2.6" stroke-linecap="round"/><circle cx="804" cy="219" r="3.4" fill="#5a5a5a"/><circle cx="804" cy="219" r="1.6" fill="#262626"/>
<circle cx="824.1" cy="219.1" r="11.7" fill="#111" opacity="0.5"/><circle cx="823.5" cy="218.1" r="11.7" fill="url(#gBtn)"/><circle cx="823.5" cy="218.1" r="10.5" fill="none" stroke="#d0d0d0" stroke-width="0.7" opacity="0.5"/>
<circle cx="820.3" cy="214.9" r="1.9" fill="#5a5a5a" stroke="#7c7c7c" stroke-width="0.6"/>
<circle cx="820.3" cy="221.3" r="1.9" fill="#5a5a5a" stroke="#7c7c7c" stroke-width="0.6"/>
<circle cx="826.7" cy="214.9" r="1.9" fill="#5a5a5a" stroke="#7c7c7c" stroke-width="0.6"/>
<circle cx="826.7" cy="221.3" r="1.9" fill="#5a5a5a" stroke="#7c7c7c" stroke-width="0.6"/>
<circle cx="890.8000000000001" cy="218" r="16.2" fill="#111" opacity="0.5"/><circle cx="890.2" cy="217" r="16.2" fill="url(#gBtn)"/><circle cx="890.2" cy="217" r="15.0" fill="none" stroke="#d0d0d0" stroke-width="0.7" opacity="0.5"/>
<circle cx="885.8" cy="212.6" r="2.5" fill="#5a5a5a" stroke="#7c7c7c" stroke-width="0.6"/>
<circle cx="885.8" cy="221.4" r="2.5" fill="#5a5a5a" stroke="#7c7c7c" stroke-width="0.6"/>
<circle cx="894.6" cy="212.6" r="2.5" fill="#5a5a5a" stroke="#7c7c7c" stroke-width="0.6"/>
<circle cx="894.6" cy="221.4" r="2.5" fill="#5a5a5a" stroke="#7c7c7c" stroke-width="0.6"/>
<use href="#tri" x="918.4" y="240.9"/>
<rect x="940.6" y="205.5" width="14.6" height="12.6" rx="1.6" fill="url(#gL)"/><path d="M943.6,205.5 V201.5 Q947.9,194 952.2,201.5 V205.5" stroke="#8c8c8c" stroke-width="2.2" fill="none"/>
<rect x="972.5" y="199.2" width="14.4" height="35" rx="7.2" fill="none" stroke="#6e6e6e" stroke-width="2.4"/>
<circle cx="973.6" cy="218" r="11" fill="#111" opacity="0.5"/><circle cx="973" cy="217" r="11" fill="url(#gBtn)"/><circle cx="973" cy="217" r="9.8" fill="none" stroke="#d0d0d0" stroke-width="0.7" opacity="0.5"/>
<circle cx="970.0" cy="214.0" r="1.8" fill="#5a5a5a" stroke="#7c7c7c" stroke-width="0.6"/>
<circle cx="970.0" cy="220.0" r="1.8" fill="#5a5a5a" stroke="#7c7c7c" stroke-width="0.6"/>
<circle cx="976.0" cy="214.0" r="1.8" fill="#5a5a5a" stroke="#7c7c7c" stroke-width="0.6"/>
<circle cx="976.0" cy="220.0" r="1.8" fill="#5a5a5a" stroke="#7c7c7c" stroke-width="0.6"/>
<rect x="1044.1" y="203.2" width="39.6" height="33.2" fill="url(#gD)"/><rect x="1062.2" y="203.2" width="3.4" height="33.2" fill="#1c1c1c"/>
<g fill="#e6e6e6"><rect x="1058" y="213.8" width="5.8" height="2.2"/><rect x="1064.6" y="218.1" width="5.8" height="2.2"/><rect x="1058" y="222.4" width="5.8" height="2.2"/><rect x="1064.6" y="226.7" width="5.8" height="2.2"/><rect x="1058" y="231.0" width="5.8" height="2.2"/></g>
<path d="M1063.9,193.8 Q1070.5,194 1070.5,201 Q1070,206 1068,208 L1068.5,213 H1059.3 L1059.8,208 Q1057.3,206 1057.3,201 Q1057.3,194 1063.9,193.8Z" fill="#111"/><path d="M1063.9,195.4 Q1068.8,195.6 1068.8,201 Q1068.5,205.5 1066.5,207 L1067,211.5 H1060.8 L1061.3,207 Q1059,205.5 1059,201 Q1059,195.6 1063.9,195.4Z" fill="url(#gL2)"/><rect x="1062.6" y="198.5" width="2.6" height="5.5" rx="1.3" fill="#2a2a2a"/>
<use href="#cur" x="1137.9" y="195.8"/>
<path d="M1163.9,206.4 L1185.4,203.9 V222.2 L1163.9,219.9Z" fill="url(#gD)"/><path d="M1161.9,221 L1188,225 V229.5 L1161.9,225.4Z" fill="#dcdcdc"/>
<path d="M1223.3,205.2 L1254.9,200.9 V225.6 L1223.3,222.2Z" fill="url(#gD)"/><path d="M1221,223.3 L1257.5,228.4 V232.9 L1221,227.6Z" fill="#dcdcdc"/>
<path d="M1331.3,204 Q1331.3,196.7 1338,196.7 Q1344.8,196.7 1344.8,204 V230 Q1344.8,236.9 1338,236.9 Q1331.3,236.9 1331.3,230Z" fill="url(#gD)"/><path d="M1336.2,198 V212.5 Q1338,215 1339.9,212.5 V198" fill="#252525"/><path d="M1332,217 Q1338,224 1344.2,217" stroke="#333" stroke-width="1.3" fill="none"/>
<g fill="#dedede"><path d="M1313.7,215.2 H1320.5 V211.3 L1327.5,217.1 L1320.5,223 V219 H1313.7Z"/><path d="M1362.4,215.2 H1355.6 V211.3 L1348.6,217.1 L1355.6,223 V219 H1362.4Z"/></g>
<!--/ICONS3D-->
<!--ICONS2D-->
<path d="M2084.1,132.5 L2084.1,150.6 L2088.9,145.3 L2096.4,146.2Z" fill="#1d1d1d" stroke="#9a9a9a" stroke-width="1.1"/>
<path d="M2099.7,169.9 H2130 V144.5Z" fill="url(#gYel)"/>
<use href="#cur" x="2158.1" y="132.3"/>
<path d="M2193.5,145.8 L2169.4,167 H2193.5Z" fill="none" stroke="#7c7c7c" stroke-width="1.4"/>
<circle cx="2193.5" cy="145.8" r="4.1000000000000005" fill="#151515" opacity="0.55"/><circle cx="2193.5" cy="145.8" r="3.2" fill="url(#gBall)"/>
<circle cx="2169.4" cy="167" r="4.1000000000000005" fill="#151515" opacity="0.55"/><circle cx="2169.4" cy="167" r="3.2" fill="url(#gBall)"/>
<circle cx="2193.5" cy="167" r="4.1000000000000005" fill="#151515" opacity="0.55"/><circle cx="2193.5" cy="167" r="3.2" fill="url(#gBall)"/>
<use href="#tri" x="2212" y="176.7"/>
<use href="#cur" x="2232.1" y="132.3"/>
<path d="M2261.8,133.6 L2286,146.9 L2281.9,154.2 L2259.4,142.9Z" fill="#5a5a5a"/><rect x="2253.8" y="155" width="28.1" height="17.7" fill="url(#gD)"/><path d="M2258.9,142.1 L2253.8,155.3" stroke="#9a9a9a" stroke-width="1.5"/>
<circle cx="2258.9" cy="142.1" r="3.9" fill="#151515" opacity="0.55"/><circle cx="2258.9" cy="142.1" r="3" fill="url(#gBall)"/>
<circle cx="2253.8" cy="155.3" r="3.9" fill="#151515" opacity="0.55"/><circle cx="2253.8" cy="155.3" r="3" fill="url(#gBall)"/>
<path d="M2313.6,138.9 H2333.4 Q2336,150 2351.9,151.7 V168.6 H2313.6Z" fill="#111" opacity="0.5"/><path d="M2312.8,138.1 H2332.6 Q2335,149.5 2351.1,150.9 V167.8 H2312.8Z" fill="url(#gD)"/><path d="M2312.8,138.1 H2332.6 Q2335,149.5 2351.1,150.9 V167.8 H2312.8Z" fill="#8a8a8a" opacity="0.35"/>
<use href="#tri" x="2359.9" y="176.7"/>
<rect x="2384" y="136.1" width="43.4" height="33.8" fill="#696969"/><path d="M2391.3,142.1 H2406.5 Q2408.5,150 2421,150.9 V163 H2391.3Z" fill="#5a5a5a" stroke="#e2e2e2" stroke-width="1.7"/>
<use href="#tri" x="2433.9" y="176.7"/>
<rect x="2456" y="135.9" width="28.3" height="34.1" fill="#484848"/><path d="M2480.1,133 H2504 V148 L2491.7,159 L2480.1,148Z" fill="url(#gL2)"/><path d="M2462,150.3 H2478.5 V159.8 L2470.2,166.9 L2462,159.8Z" fill="#1e1e1e" stroke="#eaeaea" stroke-width="1.2"/>
<path d="M2558.3,135.9 L2569,143.5 V170 L2558.3,162.5Z" fill="url(#gL2)"/><path d="M2569,143.5 L2575.8,135.9 V162.5 L2569,170Z" fill="#555"/><path d="M2575.8,135.9 L2586.6,143.5 V170 L2575.8,162.5Z" fill="url(#gL2)"/><path d="M2586.6,143.5 L2593.2,135.9 V162.5 L2586.6,170Z" fill="#555"/><path d="M2593.2,135.9 L2602.4,143.5 V170 L2593.2,162.5Z" fill="url(#gL2)"/>
<use href="#tri" x="2608.2" y="176.3"/>
<g fill="#626262"><circle cx="2680" cy="136.3" r="4.5"/><path d="M2673,142.5 H2684 V162 H2673Z M2673.5,143.5 L2664.5,152.5 Q2663,154.5 2665,155 L2674.5,147.5Z"/><rect x="2673.3" y="163" width="4.8" height="11.6" rx="2.2"/><rect x="2679.6" y="163" width="4.8" height="11.6" rx="2.2"/></g>
<path d="M2680.3,144.3 L2684.5,142.8 Q2687,144 2688.5,147 L2687.3,151 L2689.6,154 L2689,162 L2680.3,163.3Z" fill="#d4d4d4"/><path d="M2690.5,141.5 L2694,139.5 L2697,144 L2694.5,147 L2698.8,151 L2698,161 L2692,161.8 L2692,154 L2690,151 L2692,147Z" fill="#9a9a9a"/>
<g transform="translate(2788.2,148)"><use href="#chev" fill="#2f2f2f" x="0.8" y="0.4"/><use href="#chev" fill="#2f2f2f" x="6.8" y="0.4"/><use href="#chev" fill="#161616"/><use href="#chev" fill="#161616" x="6"/></g>
<use href="#cur" x="2084.1" y="196"/>
<use href="#sm" x="2103.0" y="209.2" fill="#111" opacity="0.5"/><use href="#sm" x="2102.2" y="208.2" fill="url(#gL)"/>
<use href="#smd" x="2171.3" y="199.5"/>
<path d="M2163.4,231.3 H2187.1" stroke="#8a8a8a" stroke-width="1.6"/>
<circle cx="2163.4" cy="231.3" r="4.1000000000000005" fill="#151515" opacity="0.55"/><circle cx="2163.4" cy="231.3" r="3.2" fill="url(#gBall)"/>
<circle cx="2187.1" cy="231.3" r="4.1000000000000005" fill="#151515" opacity="0.55"/><circle cx="2187.1" cy="231.3" r="3.2" fill="url(#gBall)"/>
<use href="#tri" x="2209.9" y="238.3"/>
<use href="#smd" x="2245.2" y="199.5"/>
<path d="M2235.3,232.8 Q2243,226.5 2250.6,231 Q2258,236 2265.8,233.4" stroke="#5e5e5e" stroke-width="3" fill="none" stroke-linecap="round"/>
<circle cx="2250.6" cy="231" r="4.1000000000000005" fill="#151515" opacity="0.55"/><circle cx="2250.6" cy="231" r="3.2" fill="url(#gBall)"/>
<use href="#tri" x="2283.5" y="238.3"/>
<circle cx="2314.1" cy="202.9" r="6" fill="none" stroke="#6a6a6a" stroke-width="2"/><path d="M2317.6,208 L2321.5,214.8" stroke="#6a6a6a" stroke-width="3.2" stroke-linecap="round"/>
<use href="#sm" x="2327.4" y="209.2" fill="#111" opacity="0.5"/><use href="#sm" x="2326.6" y="208.2" fill="url(#gL)"/>
<path d="M2410.9,226 Q2416,214 2432,206.5 Q2440,204 2442,205.5 H2423 Q2420,205 2422,202.6 L2443,201.7 Q2449,202.5 2451.5,209 L2455.3,226Z" fill="#111" opacity="0.5" transform="translate(0.8,0.9)"/><path d="M2410.9,226 Q2416,214 2432,206.5 Q2440,204 2442,205.5 H2423 Q2420,205 2422,202.6 L2443,201.7 Q2449,202.5 2451.5,209 L2455.3,226Z" fill="url(#gM)"/><path d="M2428,208.2 Q2436,205.6 2441,207.2 Q2437,209.6 2431,210Z" fill="#262626"/><rect x="2410.5" y="221.7" width="45" height="1.6" fill="#2e2e2e"/><circle cx="2446.5" cy="216.5" r="2.3" fill="#2a2a2a"/><path d="M2416,228.5 H2452 L2458,238 H2408Z" fill="url(#gDf)" opacity="0.6"/>
<use href="#cur" x="2505.9" y="195.8"/>
<g transform="translate(2538.1,223.4)"><use href="#tee2" fill="#111" opacity="0.5" transform="translate(0.8,0.9) scale(0.92,0.82)"/><use href="#tee2" fill="url(#gM)" transform="scale(0.92,0.82)"/><path d="M-5.6,-13.6 Q0,-5.8 5.6,-13.6" stroke="#d4d4d4" stroke-width="2.4" fill="none"/></g>
<use href="#cur" x="2606" y="195.8"/>
<g transform="translate(2625.2,203.6)"><path d="M0,3 L13,6 L17,28 L4,26 Q1,15 0,3Z" fill="url(#chk)"/><path d="M2,25 Q12,30 22,27 L24,31 Q12,34 3,29Z" fill="#cfcfcf"/><path d="M13,6 Q16,-1 24,0 Q31,1 30,8 L27,26 Q27,31 21,30 Q16,29 17,24 Q18,21 22,22 L17,22Z" fill="url(#gRoll)"/></g>
<g transform="translate(2738.4,212.1)"><use href="#chev" fill="#2f2f2f" x="0.8" y="0.4"/><use href="#chev" fill="#2f2f2f" x="6.8" y="0.4"/><use href="#chev" fill="#161616"/><use href="#chev" fill="#161616" x="6"/></g>
<g transform="translate(2788,212.1)"><use href="#chev" fill="#2f2f2f" x="0.8" y="0.4"/><use href="#chev" fill="#2f2f2f" x="6.8" y="0.4"/><use href="#chev" fill="#161616"/><use href="#chev" fill="#161616" x="6"/></g>
<!--/ICONS2D-->
<!--CABLES-->
<defs><path id="c1" d="M1010.4,765.1 C1015.9,761.2 1031.5,750.1 1043.2,741.7 C1054.9,733.3 1068.2,721.7 1080.7,714.5 C1093.2,707.3 1106.5,702.1 1118.2,698.5 C1129.9,694.9 1140.1,693.0 1151.1,692.9 C1162.0,692.8 1168.3,693.8 1183.9,697.6 C1199.5,701.4 1223.0,709.3 1244.9,715.9 C1266.8,722.5 1295.7,731.7 1315.2,737.0 C1334.7,742.3 1348.0,745.4 1362.1,747.8 C1376.2,750.2 1383.2,749.7 1400.0,751.2 C1416.8,752.7 1441.9,756.1 1462.8,756.6 C1483.7,757.1 1504.7,756.7 1525.6,754.5 C1546.5,752.3 1567.5,748.0 1588.4,743.4 C1609.4,738.8 1630.3,732.6 1651.3,726.7 C1672.2,720.8 1696.7,713.1 1714.1,707.8 C1731.5,702.4 1746.5,697.4 1755.9,694.6 C1765.3,691.8 1766.6,691.3 1770.6,691.1 C1774.6,690.9 1777.2,691.3 1780.0,693.2 C1782.8,695.1 1785.1,698.2 1787.4,702.6 C1789.7,707.0 1791.2,712.7 1793.6,719.3 C1796.0,725.9 1799.4,735.3 1802.0,742.4 C1804.6,749.5 1803.7,748.7 1809.3,762.0 C1814.9,775.3 1825.4,801.9 1835.5,822.4 C1845.6,842.9 1857.7,863.9 1869.8,884.7 C1881.9,905.5 1899.3,931.5 1908.1,947.1 C1916.9,962.7 1919.9,970.1 1922.8,978.3 C1925.7,986.4 1925.2,988.2 1925.5,996.0 C1925.8,1003.8 1924.0,1012.5 1924.7,1025.1 C1925.5,1037.7 1927.7,1058.8 1930.0,1071.8 C1932.3,1084.8 1934.9,1092.6 1938.4,1103.0 C1941.9,1113.4 1946.4,1123.8 1950.9,1134.2 C1955.4,1144.6 1962.1,1156.9 1965.2,1165.4 C1968.3,1173.9 1968.9,1181.7 1969.6,1185.0"/><path id="c2" d="M974.1,579.8 C980.5,581.8 999.4,588.8 1012.8,591.9 C1026.2,595.0 1037.2,597.2 1054.7,598.2 C1072.2,599.2 1098.3,597.2 1117.5,597.6 C1136.7,598.0 1152.3,597.6 1169.8,600.3 C1187.2,603.0 1203.0,608.8 1222.2,613.7 C1241.4,618.7 1264.1,624.6 1285.0,630.0 C1305.9,635.4 1330.3,642.4 1347.8,646.2 C1365.2,650.1 1377.5,652.0 1389.7,653.1 C1401.9,654.2 1408.7,652.1 1420.9,652.8 C1433.1,653.4 1445.3,654.7 1462.8,657.0 C1480.2,659.3 1504.7,664.2 1525.6,666.6 C1546.5,669.0 1567.5,670.9 1588.4,671.6 C1609.4,672.3 1630.3,672.1 1651.3,670.8 C1672.2,669.5 1696.7,666.1 1714.1,663.9 C1731.5,661.7 1745.8,658.8 1755.9,657.6 C1766.0,656.4 1769.2,655.6 1774.8,656.5 C1780.4,657.4 1785.2,659.3 1789.4,662.8 C1793.6,666.3 1796.8,671.9 1799.9,677.5 C1803.1,683.1 1805.2,689.3 1808.3,696.3 C1811.4,703.3 1815.0,710.9 1818.8,719.3 C1822.6,727.7 1827.8,739.5 1831.3,746.6 C1834.8,753.7 1834.9,753.6 1840.0,762.0 C1845.1,770.4 1855.3,786.9 1862.0,797.0 C1868.7,807.1 1871.0,807.8 1880.1,822.4 C1889.2,837.0 1904.8,863.9 1916.5,884.7 C1928.2,905.5 1942.9,931.5 1950.2,947.1 C1957.5,962.7 1958.4,967.9 1960.2,978.3 C1962.0,988.7 1959.9,1000.1 1960.8,1009.5 C1961.7,1018.9 1962.9,1026.6 1965.8,1034.4 C1968.7,1042.2 1974.8,1049.0 1978.3,1056.3 C1981.8,1063.6 1985.5,1070.8 1987.0,1078.1 C1988.5,1085.4 1988.3,1093.7 1987.6,1099.9 C1986.9,1106.1 1983.8,1112.9 1983.0,1115.5"/><path id="c3" d="M1212.0,704.2 C1217.5,706.1 1233.9,712.1 1244.9,715.9 C1255.8,719.6 1272.2,724.9 1277.7,726.7"/><path id="c4" d="M1010.4,765.1 C1014.7,766.1 1028.3,768.0 1036.2,770.8 C1044.0,773.5 1052.2,776.2 1057.3,781.6 C1062.3,786.9 1065.4,792.1 1066.6,802.7 C1067.9,813.2 1064.0,832.7 1064.8,844.9 C1065.6,857.0 1069.9,868.1 1071.4,875.6 C1072.9,883.0 1073.0,884.4 1073.8,889.6 C1074.5,894.8 1074.9,900.8 1076.1,906.8 C1077.3,912.7 1079.6,920.3 1080.8,925.5 C1082.0,930.6 1082.9,933.2 1083.4,937.9 C1084.0,942.6 1083.9,950.9 1084.0,953.5"/><path id="c5" d="M648.6,650.4 C648.9,656.7 649.1,676.8 650.1,688.0 C651.1,699.1 652.3,708.5 654.5,717.3 C656.7,726.1 659.6,733.1 663.3,740.7 C667.0,748.3 672.2,755.9 676.5,762.7 C680.8,769.5 683.4,773.7 688.8,781.8 C694.2,789.8 703.2,801.3 708.7,811.1 C714.3,820.9 718.8,831.6 721.9,840.4 C725.1,849.2 726.2,856.5 727.8,863.9 C729.4,871.2 730.4,877.5 731.6,884.4 C732.8,891.2 734.5,901.5 735.1,904.9"/><path id="c6" d="M192.8,700.8 C197.5,701.9 209.2,706.8 220.9,707.5 C232.6,708.2 248.8,707.2 262.8,704.8 C276.8,702.4 290.7,698.4 304.7,693.3 C318.7,688.2 332.7,679.3 346.6,674.4 C360.6,669.5 374.4,666.1 388.4,664.0 C402.3,661.9 416.3,661.5 430.3,661.9 C444.3,662.3 458.2,663.7 472.2,666.5 C486.2,669.3 500.1,673.2 514.1,678.6 C528.1,684.0 542.0,691.8 556.0,699.1 C570.0,706.4 583.8,714.5 597.8,722.6 C611.8,730.7 628.0,740.3 639.7,747.7 C651.4,755.1 659.1,760.5 667.7,767.1 C676.3,773.8 684.3,780.3 691.2,787.6 C698.0,795.0 704.1,803.3 708.7,811.1 C713.4,818.9 716.6,826.7 719.0,834.5 C721.5,842.4 722.2,850.7 723.4,858.0 C724.6,865.3 725.1,870.7 726.3,878.5 C727.6,886.3 730.0,900.5 730.7,904.9"/><path id="c7" d="M785.5,981.9 C786.0,987.6 788.0,1006.4 788.3,1015.8 C788.7,1025.2 788.2,1030.0 787.8,1038.4 C787.4,1046.9 786.5,1057.6 785.9,1066.7 C785.3,1075.8 784.3,1088.7 784.0,1093.1"/><path id="c8" d="M764.8,1000.7 C765.3,1003.3 767.5,1009.5 768.0,1015.8 C768.5,1022.1 768.0,1031.5 767.8,1038.4 C767.7,1045.3 767.2,1054.1 767.1,1057.3"/><path id="c9" d="M793.1,974.4 C796.2,975.8 805.6,980.2 811.9,982.8 C818.2,985.5 825.1,987.4 830.7,990.4 C836.4,993.4 841.6,996.5 845.8,1000.7 C850.1,1005.0 855.1,1011.1 856.2,1015.8 C857.3,1020.5 853.0,1026.8 852.4,1029.0"/><path id="c10" d="M850.5,1028.1 L872.2,906.5"/><path id="c11" d="M892.0,1028.1 L910.8,899.9"/><path id="c12" d="M931.6,1026.2 L948.5,893.3"/><path id="c13" d="M967.4,1025.2 L990.9,887.1"/><path id="c14" d="M1000.3,964.9 C1003.5,966.8 1013.4,973.0 1019.2,975.9 C1025.0,978.8 1032.5,981.4 1035.2,982.5"/><path id="c15" d="M1054.6,1009.6 C1055.3,1013.2 1057.8,1023.9 1059.0,1031.4 C1060.1,1039.0 1060.7,1047.0 1061.3,1054.8 C1061.9,1062.6 1062.7,1069.4 1062.5,1078.2 C1062.4,1086.9 1060.6,1097.9 1060.2,1107.3 C1059.7,1116.7 1060.2,1125.5 1059.8,1134.5 C1059.4,1143.6 1058.2,1155.8 1057.6,1161.8 C1057.1,1167.9 1056.6,1169.4 1056.4,1170.9"/><path id="c16" d="M990.9,887.1 L1000.3,1024.3"/><path id="c17" d="M948.5,893.3 L967.4,1025.2"/><path id="c18" d="M910.8,899.9 L931.6,1026.2"/><path id="c19" d="M872.2,906.5 L892.0,1028.1"/><path id="c20" d="M828.3,914.6 L850.5,1028.1"/><path id="c21" d="M1073.4,889.6 C1073.9,892.5 1074.9,900.8 1076.1,906.8 C1077.3,912.7 1079.6,920.3 1080.8,925.5 C1082.0,930.6 1082.9,934.3 1083.4,937.9 C1084.0,941.6 1083.9,945.7 1084.0,947.3"/><path id="c22" d="M989.6,886.5 C992.5,887.1 1000.8,888.3 1006.8,890.4 C1012.7,892.5 1019.2,895.5 1025.5,899.0 C1031.7,902.5 1038.2,907.0 1044.2,911.4 C1050.1,915.8 1056.1,920.5 1061.3,925.5 C1066.5,930.4 1071.4,935.3 1075.3,941.0 C1079.2,946.7 1082.5,953.5 1084.7,959.7 C1086.9,966.0 1087.9,971.7 1088.6,978.4 C1089.2,985.2 1088.9,992.7 1088.6,1000.3 C1088.2,1007.8 1087.2,1015.8 1086.5,1023.6 C1085.9,1031.4 1085.0,1037.6 1084.7,1047.0 C1084.4,1056.4 1084.8,1065.4 1084.7,1080.0 C1084.6,1094.6 1084.8,1116.4 1084.2,1134.5 C1083.5,1152.7 1082.2,1174.5 1080.9,1189.1 C1079.6,1203.6 1078.0,1213.9 1076.4,1221.8 C1074.7,1229.7 1071.8,1233.9 1070.9,1236.4"/><path id="c23" d="M722.4,887.7 C723.7,892.4 726.5,905.9 729.9,916.0 C733.4,926.0 738.7,937.6 743.1,948.0 C747.5,958.3 752.8,969.3 756.3,978.1 C759.9,986.9 762.5,994.1 764.4,1000.7 C766.4,1007.4 767.4,1015.3 768.0,1018.3"/><path id="c24" d="M741.4,877.3 C742.2,880.9 743.5,890.4 746.3,899.0 C749.1,907.6 753.7,919.7 758.2,929.1 C762.7,938.6 768.9,946.7 773.3,955.5 C777.7,964.3 782.1,971.6 784.6,981.9 C787.1,992.2 787.6,1011.4 788.2,1017.3"/><path id="c25" d="M768.6,963.1 C772.6,965.0 785.3,971.2 793.1,974.7 C800.8,978.3 811.3,982.6 814.9,984.2"/><path id="c26" d="M734.5,1221.7 C732.1,1231.4 724.3,1264.1 719.9,1279.9 C715.6,1295.7 710.1,1302.9 708.3,1316.2 C706.5,1329.6 707.4,1346.5 709.0,1359.9 C710.7,1373.2 714.6,1385.0 718.1,1396.2 C721.6,1407.4 728.1,1422.0 730.1,1427.1"/><path id="c27" d="M803.4,1200.6 C804.8,1203.1 810.1,1209.1 811.9,1215.7 C813.7,1222.3 814.5,1233.6 814.2,1240.2 C813.8,1246.8 810.4,1252.7 809.6,1255.2"/><path id="c28" d="M811.9,1249.6 C814.7,1240.2 823.3,1211.0 828.9,1193.1 C834.5,1175.2 842.7,1150.7 845.4,1142.2"/><path id="c29" d="M840.2,1261.8 L879.4,1130.9"/><path id="c30" d="M876.9,1270.3 L913.7,1134.6"/><path id="c31" d="M915.5,1276.0 L949.5,1137.5"/><path id="c32" d="M955.1,1283.5 C958.2,1268.4 969.9,1213.8 974.0,1193.1 C978.0,1172.3 978.7,1164.8 979.6,1159.1"/><path id="c33" d="M978.7,1181.8 C978.8,1177.4 979.4,1162.3 979.6,1155.4 C979.8,1148.4 978.7,1144.1 980.0,1140.0 C981.3,1135.9 984.2,1132.1 987.3,1130.9 C990.3,1129.7 995.5,1129.7 998.2,1132.7 C1000.9,1135.8 1002.4,1142.7 1003.6,1149.1 C1004.8,1155.5 1003.9,1163.6 1005.5,1170.9 C1007.0,1178.2 1009.4,1186.1 1012.7,1192.7 C1016.1,1199.4 1020.9,1205.5 1025.5,1210.9 C1030.0,1216.4 1037.6,1223.0 1040.0,1225.5"/><path id="c34" d="M949.5,1137.5 C950.8,1146.7 956.4,1168.7 957.4,1193.1 C958.3,1217.4 955.5,1268.4 955.1,1283.5"/><path id="c35" d="M913.7,1134.6 C914.4,1144.4 918.1,1169.5 918.4,1193.1 C918.7,1216.6 916.0,1262.1 915.5,1276.0"/><path id="c36" d="M879.4,1130.9 C879.9,1141.2 883.0,1169.8 882.6,1193.1 C882.2,1216.3 877.9,1257.4 876.9,1270.3"/><path id="c37" d="M845.4,1130.9 C845.2,1141.2 844.8,1171.2 843.9,1193.1 C843.1,1214.9 840.8,1250.4 840.2,1261.8"/><path id="c38" d="M1011.8,1269.1 C1010.2,1272.4 1005.9,1281.8 1001.8,1289.1 C997.7,1296.4 992.4,1305.2 987.3,1312.7 C982.1,1320.3 980.2,1322.8 970.9,1334.5 C961.6,1346.3 941.2,1370.3 931.5,1383.1 C921.8,1395.9 919.6,1402.5 912.6,1411.3 C905.7,1420.1 897.9,1428.0 890.0,1435.8 C882.2,1443.7 870.9,1453.1 865.5,1458.4 C860.2,1463.8 859.3,1466.3 858.0,1467.9"/><path id="c39" d="M1008.2,1333.6 C1006.2,1336.2 1002.9,1339.3 996.4,1349.1 C989.9,1358.9 976.8,1380.5 969.2,1392.5 C961.5,1404.4 956.0,1411.3 950.3,1420.7 C944.7,1430.2 939.5,1439.6 935.3,1449.0 C931.0,1458.4 927.4,1469.4 924.9,1477.3 C922.4,1485.1 921.0,1493.0 920.2,1496.1"/><path id="c40" d="M1057.6,1162.7 C1056.8,1165.9 1054.8,1175.6 1052.7,1181.8 C1050.7,1188.0 1047.9,1195.0 1045.5,1200.0 C1043.0,1205.0 1039.4,1209.8 1038.2,1211.8"/><path id="c41" d="M974.5,1238.5 C976.7,1238.2 982.7,1237.1 987.3,1236.4 C991.8,1235.6 999.4,1234.5 1001.8,1234.2"/><path id="c42" d="M1028.2,1212.7 C1030.2,1214.8 1035.9,1221.2 1040.0,1225.5 C1044.1,1229.7 1049.1,1234.5 1052.7,1238.2 C1056.4,1241.8 1060.3,1245.8 1061.8,1247.3"/><path id="c43" d="M1078.5,1215.5 C1077.9,1217.7 1076.1,1224.7 1074.5,1229.1 C1073.0,1233.5 1070.0,1239.7 1069.1,1241.8"/><path id="c44" d="M1064.5,1249.1 C1063.0,1251.5 1058.3,1258.5 1055.5,1263.6 C1052.6,1268.8 1050.3,1274.2 1047.3,1280.0 C1044.2,1285.8 1041.7,1292.1 1037.3,1298.2 C1032.9,1304.2 1025.7,1310.5 1020.9,1316.4 C1016.2,1322.2 1010.8,1330.3 1008.7,1333.1"/><path id="c45" d="M777.5,1302.4 C777.1,1304.2 775.7,1309.6 775.1,1313.3 C774.5,1317.0 774.3,1322.8 774.1,1324.6"/><path id="c46" d="M811.5,1317.5 C811.1,1319.3 809.6,1324.7 809.0,1328.4 C808.4,1332.1 808.2,1337.8 808.1,1339.7"/><path id="c47" d="M844.4,1332.6 C844.0,1334.4 842.5,1339.8 842.0,1343.5 C841.4,1347.2 841.2,1352.9 841.0,1354.8"/><path id="c48" d="M876.5,1345.7 C876.1,1347.6 874.6,1353.0 874.0,1356.7 C873.5,1360.4 873.2,1366.1 873.1,1368.0"/><path id="c49" d="M906.6,1357.1 C906.2,1358.9 904.7,1364.3 904.2,1368.0 C903.6,1371.7 903.4,1377.4 903.2,1379.3"/><path id="c50" d="M726.1,1448.1 C732.3,1438.4 749.7,1409.4 763.3,1390.1 C777.0,1370.8 800.6,1341.8 808.1,1332.2"/><path id="c51" d="M757.2,1464.1 C763.6,1454.3 781.4,1425.1 795.3,1405.7 C809.3,1386.2 833.4,1357.0 841.0,1347.3"/><path id="c52" d="M790.2,1481.0 C796.4,1471.0 814.0,1440.8 827.9,1420.7 C841.7,1400.6 865.5,1370.5 873.1,1360.4"/><path id="c53" d="M826.0,1500.8 C831.8,1490.1 848.0,1457.8 860.8,1436.3 C873.7,1414.8 896.2,1382.5 903.2,1371.8"/><path id="c54" d="M692.2,1401.9 C696.9,1396.2 712.0,1379.6 720.4,1368.0 C728.9,1356.4 739.3,1338.1 743.1,1332.2"/><path id="c55" d="M903.2,1372.7 C901.8,1380.7 897.7,1406.5 894.7,1420.7 C891.8,1435.0 886.7,1448.7 885.3,1458.4 C884.0,1468.2 886.4,1475.7 886.6,1479.2"/><path id="c56" d="M873.1,1360.4 L826.0,1500.8"/><path id="c57" d="M841.0,1347.3 L790.2,1481.0"/><path id="c58" d="M808.1,1332.2 L757.2,1464.1"/><path id="c59" d="M774.1,1317.1 L726.1,1448.1"/><path id="c60" d="M750.1,1205.3 C747.8,1209.5 741.0,1223.4 736.5,1230.7 C732.1,1238.1 728.0,1243.3 723.3,1249.6 C718.6,1255.9 710.8,1265.0 708.3,1268.4 C705.7,1271.8 710.9,1267.5 708.2,1270.0 C705.5,1272.5 697.5,1278.5 692.2,1283.2 C686.8,1287.9 680.6,1292.9 676.2,1298.3 C671.7,1303.6 667.5,1309.9 665.4,1315.2 C663.4,1320.6 663.1,1325.0 663.9,1330.3 C664.8,1335.6 667.1,1342.2 670.5,1347.3 C674.0,1352.3 680.4,1355.7 684.6,1360.4 C688.9,1365.2 693.8,1369.2 696.0,1375.5 C698.1,1381.8 699.0,1390.9 697.8,1398.1 C696.6,1405.4 691.1,1414.2 688.8,1418.9 C686.5,1423.5 685.0,1424.8 684.3,1426.0"/><path id="c61" d="M767.6,1054.1 C766.8,1058.7 763.7,1072.7 762.5,1081.8 C761.3,1090.8 760.2,1099.1 760.5,1108.3 C760.7,1117.4 762.5,1128.0 763.9,1136.5 C765.2,1145.0 768.7,1151.9 768.6,1159.1 C768.4,1166.4 766.0,1172.2 762.9,1179.9 C759.8,1187.6 752.2,1201.1 750.1,1205.3"/><path id="c62" d="M768.6,1159.1 C771.4,1162.3 780.3,1172.0 785.5,1178.0 C790.7,1184.0 796.1,1190.3 799.7,1194.9 C803.2,1199.6 805.5,1204.0 806.6,1205.9"/><path id="c63" d="M886.6,1474.4 C887.2,1478.1 888.2,1489.4 890.0,1496.1 C891.9,1502.9 896.9,1508.7 897.6,1515.0 C898.2,1521.2 895.5,1527.5 893.8,1533.8 C892.1,1540.1 888.3,1549.5 887.2,1552.6"/><path id="c64" d="M924.3,1482.9 C923.1,1486.7 920.3,1498.6 916.8,1505.5 C913.3,1512.4 905.5,1521.2 903.2,1524.4"/><path id="c65" d="M897.6,1515.0 C896.6,1518.7 893.3,1533.1 891.9,1537.6 C890.6,1542.0 891.7,1535.5 889.5,1541.7 C887.3,1547.9 882.4,1565.3 878.9,1574.9 C875.5,1584.4 871.4,1591.2 869.0,1599.0 C866.6,1606.8 865.5,1617.8 864.8,1621.6"/><path id="c66" d="M862.0,1606.0 C861.4,1607.1 860.8,1608.4 858.5,1612.6 C856.2,1616.8 851.6,1624.8 848.1,1631.4 C844.6,1638.0 841.5,1645.3 837.6,1652.3 C833.8,1659.3 829.9,1666.7 825.0,1673.3 C820.1,1679.9 815.0,1686.3 808.3,1692.1 C801.6,1697.9 797.2,1702.5 785.0,1708.0 C772.8,1713.5 750.3,1721.2 735.0,1725.2 C719.7,1729.2 707.1,1730.4 693.1,1731.9 C679.1,1733.4 665.2,1734.5 651.3,1734.0 C637.3,1733.5 623.4,1731.8 609.4,1728.8 C595.4,1725.8 581.5,1721.2 567.5,1716.2 C553.5,1711.2 539.6,1705.2 525.6,1698.8 C511.7,1692.4 497.8,1685.3 483.8,1677.9 C469.9,1670.5 452.4,1660.3 441.9,1654.4 C431.4,1648.5 424.5,1644.6 421.0,1642.6"/></defs>
<g fill="none" stroke-linejoin="round">
<g stroke-linecap="round"><use href="#c1" stroke="#bcbcbc" stroke-width="23.0"/><use href="#c1" stroke="#c7c7c7" stroke-width="22.1" transform="translate(-0.14,-0.44)"/><use href="#c1" stroke="#d1d1d1" stroke-width="20.9" transform="translate(-0.31,-0.98)"/><use href="#c1" stroke="#dadada" stroke-width="19.6" transform="translate(-0.52,-1.64)"/><use href="#c1" stroke="#e3e3e3" stroke-width="17.9" transform="translate(-0.76,-2.40)"/><use href="#c1" stroke="#ebebeb" stroke-width="16.1" transform="translate(-1.03,-3.28)"/><use href="#c1" stroke="#f2f2f2" stroke-width="14.3" transform="translate(-1.31,-4.15)"/><use href="#c1" stroke="#f8f8f8" stroke-width="12.4" transform="translate(-1.59,-5.03)"/><use href="#c1" stroke="#fdfdfd" stroke-width="10.6" transform="translate(-1.86,-5.90)"/></g>
<g stroke-linecap="round"><use href="#c2" stroke="#bcbcbc" stroke-width="31.0"/><use href="#c2" stroke="#c7c7c7" stroke-width="29.8" transform="translate(-0.19,-0.59)"/><use href="#c2" stroke="#d1d1d1" stroke-width="28.2" transform="translate(-0.42,-1.33)"/><use href="#c2" stroke="#dadada" stroke-width="26.3" transform="translate(-0.70,-2.21)"/><use href="#c2" stroke="#e3e3e3" stroke-width="24.2" transform="translate(-1.02,-3.24)"/><use href="#c2" stroke="#ebebeb" stroke-width="21.7" transform="translate(-1.39,-4.42)"/><use href="#c2" stroke="#f2f2f2" stroke-width="19.2" transform="translate(-1.77,-5.60)"/><use href="#c2" stroke="#f8f8f8" stroke-width="16.7" transform="translate(-2.14,-6.77)"/><use href="#c2" stroke="#fdfdfd" stroke-width="14.3" transform="translate(-2.51,-7.95)"/></g>
<g stroke-linecap="butt"><use href="#c3" stroke="#a3c8d8" stroke-width="22.5"/><use href="#c3" stroke="#b0d3e2" stroke-width="21.1" transform="translate(-0.20,-0.64)"/><use href="#c3" stroke="#bbdcea" stroke-width="19.4" transform="translate(-0.47,-1.50)"/><use href="#c3" stroke="#c3e2ee" stroke-width="16.6" transform="translate(-0.88,-2.78)"/><use href="#c3" stroke="#c9e6f1" stroke-width="13.1" transform="translate(-1.42,-4.49)"/></g>
<path d="M1206.4,693.8 C1210.1,692.8 1236.8,701.5 1244.9,704.2 C1252.9,706.8 1278.2,718.2 1287.1,720.6 C1296.0,722.9 1326.3,725.6 1334.0,727.6 C1341.7,729.6 1361.7,738.2 1364.5,740.8 C1367.3,743.3 1364.7,751.8 1362.1,753.4 C1359.6,755.0 1343.8,757.4 1338.7,756.7 C1333.5,756.0 1317.6,748.1 1310.5,746.4 C1303.5,744.6 1276.3,741.5 1268.3,739.3 C1260.4,737.2 1236.8,727.8 1230.8,725.3 C1224.8,722.8 1210.7,717.6 1208.3,714.5 C1205.9,711.3 1202.8,694.9 1206.4,693.8Z" fill="#c4e2ee" stroke="#b2d5e3" stroke-width="0.8"/>
<path d="M1268.3,725.3 C1273.0,726.8 1286.3,732.3 1296.5,734.7 C1306.6,737.0 1319.9,737.4 1329.3,739.3 C1338.7,741.3 1348.8,745.2 1352.8,746.4" stroke="#dff1f8" stroke-width="2" stroke-linecap="round"/>
<g stroke-linecap="round"><use href="#c4" stroke="#bcbcbc" stroke-width="22.0"/><use href="#c4" stroke="#c7c7c7" stroke-width="21.1" transform="translate(-0.13,-0.42)"/><use href="#c4" stroke="#d1d1d1" stroke-width="20.0" transform="translate(-0.30,-0.94)"/><use href="#c4" stroke="#dadada" stroke-width="18.7" transform="translate(-0.49,-1.57)"/><use href="#c4" stroke="#e3e3e3" stroke-width="17.2" transform="translate(-0.73,-2.30)"/><use href="#c4" stroke="#ebebeb" stroke-width="15.4" transform="translate(-0.99,-3.13)"/><use href="#c4" stroke="#f2f2f2" stroke-width="13.6" transform="translate(-1.25,-3.97)"/><use href="#c4" stroke="#f8f8f8" stroke-width="11.9" transform="translate(-1.52,-4.81)"/><use href="#c4" stroke="#fdfdfd" stroke-width="10.1" transform="translate(-1.78,-5.64)"/></g>
<circle cx="1010.4" cy="764.2" r="11" fill="#ececec" stroke="none"/>
<g stroke-linecap="butt"><use href="#c5" stroke="#bcbcbc" stroke-width="30.0"/><use href="#c5" stroke="#c7c7c7" stroke-width="28.8" transform="translate(-0.18,-0.57)"/><use href="#c5" stroke="#d1d1d1" stroke-width="27.3" transform="translate(-0.40,-1.28)"/><use href="#c5" stroke="#dadada" stroke-width="25.5" transform="translate(-0.67,-2.14)"/><use href="#c5" stroke="#e3e3e3" stroke-width="23.4" transform="translate(-0.99,-3.13)"/><use href="#c5" stroke="#ebebeb" stroke-width="21.0" transform="translate(-1.35,-4.27)"/><use href="#c5" stroke="#f2f2f2" stroke-width="18.6" transform="translate(-1.71,-5.42)"/><use href="#c5" stroke="#f8f8f8" stroke-width="16.2" transform="translate(-2.07,-6.55)"/><use href="#c5" stroke="#fdfdfd" stroke-width="13.8" transform="translate(-2.43,-7.70)"/></g>
<circle cx="648.6" cy="650.4" r="14.8" fill="#ffffff" stroke="none"/>
<g stroke-linecap="butt"><use href="#c6" stroke="#bcbcbc" stroke-width="32.0"/><use href="#c6" stroke="#c7c7c7" stroke-width="30.7" transform="translate(-0.19,-0.61)"/><use href="#c6" stroke="#d1d1d1" stroke-width="29.1" transform="translate(-0.43,-1.37)"/><use href="#c6" stroke="#dadada" stroke-width="27.2" transform="translate(-0.72,-2.28)"/><use href="#c6" stroke="#e3e3e3" stroke-width="25.0" transform="translate(-1.06,-3.34)"/><use href="#c6" stroke="#ebebeb" stroke-width="22.4" transform="translate(-1.44,-4.56)"/><use href="#c6" stroke="#f2f2f2" stroke-width="19.8" transform="translate(-1.82,-5.78)"/><use href="#c6" stroke="#f8f8f8" stroke-width="17.3" transform="translate(-2.21,-6.99)"/><use href="#c6" stroke="#fdfdfd" stroke-width="14.7" transform="translate(-2.59,-8.21)"/></g>
<path d="M167.3,690.3 Q166,695 167.3,700.5 L174,703.5 L191,707 L191.5,692.6 L178,690.6Z" fill="#f4f4f4" stroke="none"/>
<path d="M172,691 L182,704 M178,691.5 L188,704.5" stroke="#cfcfcf" stroke-width="1.6"/>
<ellipse cx="193.5" cy="700.3" rx="4" ry="15.2" fill="#fbfbfb" stroke="none" transform="rotate(-8 193.5 700.3)"/>
<g stroke-linecap="butt"><use href="#c7" stroke="#bcbcbc" stroke-width="19.0"/><use href="#c7" stroke="#c7c7c7" stroke-width="18.2" transform="translate(-0.11,-0.36)"/><use href="#c7" stroke="#d1d1d1" stroke-width="17.3" transform="translate(-0.26,-0.81)"/><use href="#c7" stroke="#dadada" stroke-width="16.1" transform="translate(-0.43,-1.35)"/><use href="#c7" stroke="#e3e3e3" stroke-width="14.8" transform="translate(-0.63,-1.99)"/><use href="#c7" stroke="#ebebeb" stroke-width="13.3" transform="translate(-0.85,-2.71)"/><use href="#c7" stroke="#f2f2f2" stroke-width="11.8" transform="translate(-1.08,-3.43)"/><use href="#c7" stroke="#f8f8f8" stroke-width="10.3" transform="translate(-1.31,-4.15)"/><use href="#c7" stroke="#fdfdfd" stroke-width="8.7" transform="translate(-1.54,-4.87)"/></g>
<g stroke-linecap="butt"><use href="#c8" stroke="#bcbcbc" stroke-width="29.0"/><use href="#c8" stroke="#c7c7c7" stroke-width="27.8" transform="translate(-0.17,-0.55)"/><use href="#c8" stroke="#d1d1d1" stroke-width="26.4" transform="translate(-0.39,-1.24)"/><use href="#c8" stroke="#dadada" stroke-width="24.6" transform="translate(-0.65,-2.07)"/><use href="#c8" stroke="#e3e3e3" stroke-width="22.6" transform="translate(-0.96,-3.03)"/><use href="#c8" stroke="#ebebeb" stroke-width="20.3" transform="translate(-1.30,-4.13)"/><use href="#c8" stroke="#f2f2f2" stroke-width="18.0" transform="translate(-1.65,-5.23)"/><use href="#c8" stroke="#f8f8f8" stroke-width="15.7" transform="translate(-2.00,-6.34)"/><use href="#c8" stroke="#fdfdfd" stroke-width="13.3" transform="translate(-2.35,-7.44)"/></g>
<g stroke-linecap="round"><use href="#c9" stroke="#bcbcbc" stroke-width="27.0"/><use href="#c9" stroke="#c7c7c7" stroke-width="25.9" transform="translate(-0.16,-0.51)"/><use href="#c9" stroke="#d1d1d1" stroke-width="24.6" transform="translate(-0.36,-1.15)"/><use href="#c9" stroke="#dadada" stroke-width="22.9" transform="translate(-0.61,-1.92)"/><use href="#c9" stroke="#e3e3e3" stroke-width="21.1" transform="translate(-0.89,-2.82)"/><use href="#c9" stroke="#ebebeb" stroke-width="18.9" transform="translate(-1.21,-3.85)"/><use href="#c9" stroke="#f2f2f2" stroke-width="16.7" transform="translate(-1.54,-4.87)"/><use href="#c9" stroke="#f8f8f8" stroke-width="14.6" transform="translate(-1.86,-5.90)"/><use href="#c9" stroke="#fdfdfd" stroke-width="12.4" transform="translate(-2.19,-6.93)"/></g>
<g stroke-linecap="round"><use href="#c10" stroke="#b6b6b6" stroke-width="21.0"/><use href="#c10" stroke="#c4c4c4" stroke-width="19.7" transform="translate(-0.19,-0.60)"/><use href="#c10" stroke="#d0d0d0" stroke-width="18.1" transform="translate(-0.44,-1.40)"/><use href="#c10" stroke="#dadada" stroke-width="16.0" transform="translate(-0.76,-2.39)"/><use href="#c10" stroke="#e3e3e3" stroke-width="13.4" transform="translate(-1.13,-3.59)"/><use href="#c10" stroke="#e9e9e9" stroke-width="10.9" transform="translate(-1.51,-4.79)"/></g>
<g stroke-linecap="round"><use href="#c11" stroke="#b6b6b6" stroke-width="21.0"/><use href="#c11" stroke="#c4c4c4" stroke-width="19.7" transform="translate(-0.19,-0.60)"/><use href="#c11" stroke="#d0d0d0" stroke-width="18.1" transform="translate(-0.44,-1.40)"/><use href="#c11" stroke="#dadada" stroke-width="16.0" transform="translate(-0.76,-2.39)"/><use href="#c11" stroke="#e3e3e3" stroke-width="13.4" transform="translate(-1.13,-3.59)"/><use href="#c11" stroke="#e9e9e9" stroke-width="10.9" transform="translate(-1.51,-4.79)"/></g>
<g stroke-linecap="round"><use href="#c12" stroke="#b6b6b6" stroke-width="21.0"/><use href="#c12" stroke="#c4c4c4" stroke-width="19.7" transform="translate(-0.19,-0.60)"/><use href="#c12" stroke="#d0d0d0" stroke-width="18.1" transform="translate(-0.44,-1.40)"/><use href="#c12" stroke="#dadada" stroke-width="16.0" transform="translate(-0.76,-2.39)"/><use href="#c12" stroke="#e3e3e3" stroke-width="13.4" transform="translate(-1.13,-3.59)"/><use href="#c12" stroke="#e9e9e9" stroke-width="10.9" transform="translate(-1.51,-4.79)"/></g>
<g stroke-linecap="round"><use href="#c13" stroke="#b6b6b6" stroke-width="21.0"/><use href="#c13" stroke="#c4c4c4" stroke-width="19.7" transform="translate(-0.19,-0.60)"/><use href="#c13" stroke="#d0d0d0" stroke-width="18.1" transform="translate(-0.44,-1.40)"/><use href="#c13" stroke="#dadada" stroke-width="16.0" transform="translate(-0.76,-2.39)"/><use href="#c13" stroke="#e3e3e3" stroke-width="13.4" transform="translate(-1.13,-3.59)"/><use href="#c13" stroke="#e9e9e9" stroke-width="10.9" transform="translate(-1.51,-4.79)"/></g>
<g stroke-linecap="butt"><use href="#c14" stroke="#bcbcbc" stroke-width="21.0"/><use href="#c14" stroke="#c7c7c7" stroke-width="20.2" transform="translate(-0.13,-0.40)"/><use href="#c14" stroke="#d1d1d1" stroke-width="19.1" transform="translate(-0.28,-0.90)"/><use href="#c14" stroke="#dadada" stroke-width="17.8" transform="translate(-0.47,-1.50)"/><use href="#c14" stroke="#e3e3e3" stroke-width="16.4" transform="translate(-0.69,-2.19)"/><use href="#c14" stroke="#ebebeb" stroke-width="14.7" transform="translate(-0.94,-2.99)"/><use href="#c14" stroke="#f2f2f2" stroke-width="13.0" transform="translate(-1.20,-3.79)"/><use href="#c14" stroke="#f8f8f8" stroke-width="11.3" transform="translate(-1.45,-4.59)"/><use href="#c14" stroke="#fdfdfd" stroke-width="9.7" transform="translate(-1.70,-5.39)"/></g>
<g stroke-linecap="butt"><use href="#c15" stroke="#bcbcbc" stroke-width="21.5"/><use href="#c15" stroke="#c7c7c7" stroke-width="20.6" transform="translate(-0.13,-0.41)"/><use href="#c15" stroke="#d1d1d1" stroke-width="19.6" transform="translate(-0.29,-0.92)"/><use href="#c15" stroke="#dadada" stroke-width="18.3" transform="translate(-0.48,-1.53)"/><use href="#c15" stroke="#e3e3e3" stroke-width="16.8" transform="translate(-0.71,-2.25)"/><use href="#c15" stroke="#ebebeb" stroke-width="15.0" transform="translate(-0.97,-3.06)"/><use href="#c15" stroke="#f2f2f2" stroke-width="13.3" transform="translate(-1.23,-3.88)"/><use href="#c15" stroke="#f8f8f8" stroke-width="11.6" transform="translate(-1.48,-4.70)"/><use href="#c15" stroke="#fdfdfd" stroke-width="9.9" transform="translate(-1.74,-5.51)"/></g>
<g stroke-linecap="round"><use href="#c16" stroke="#bcbcbc" stroke-width="27.5"/><use href="#c16" stroke="#c7c7c7" stroke-width="26.4" transform="translate(-0.17,-0.52)"/><use href="#c16" stroke="#d1d1d1" stroke-width="25.0" transform="translate(-0.37,-1.18)"/><use href="#c16" stroke="#dadada" stroke-width="23.4" transform="translate(-0.62,-1.96)"/><use href="#c16" stroke="#e3e3e3" stroke-width="21.4" transform="translate(-0.91,-2.87)"/><use href="#c16" stroke="#ebebeb" stroke-width="19.2" transform="translate(-1.24,-3.92)"/><use href="#c16" stroke="#f2f2f2" stroke-width="17.1" transform="translate(-1.57,-4.96)"/><use href="#c16" stroke="#f8f8f8" stroke-width="14.9" transform="translate(-1.90,-6.01)"/><use href="#c16" stroke="#fdfdfd" stroke-width="12.6" transform="translate(-2.23,-7.05)"/></g>
<g stroke-linecap="round"><use href="#c17" stroke="#bcbcbc" stroke-width="27.5"/><use href="#c17" stroke="#c7c7c7" stroke-width="26.4" transform="translate(-0.17,-0.52)"/><use href="#c17" stroke="#d1d1d1" stroke-width="25.0" transform="translate(-0.37,-1.18)"/><use href="#c17" stroke="#dadada" stroke-width="23.4" transform="translate(-0.62,-1.96)"/><use href="#c17" stroke="#e3e3e3" stroke-width="21.4" transform="translate(-0.91,-2.87)"/><use href="#c17" stroke="#ebebeb" stroke-width="19.2" transform="translate(-1.24,-3.92)"/><use href="#c17" stroke="#f2f2f2" stroke-width="17.1" transform="translate(-1.57,-4.96)"/><use href="#c17" stroke="#f8f8f8" stroke-width="14.9" transform="translate(-1.90,-6.01)"/><use href="#c17" stroke="#fdfdfd" stroke-width="12.6" transform="translate(-2.23,-7.05)"/></g>
<g stroke-linecap="round"><use href="#c18" stroke="#bcbcbc" stroke-width="27.5"/><use href="#c18" stroke="#c7c7c7" stroke-width="26.4" transform="translate(-0.17,-0.52)"/><use href="#c18" stroke="#d1d1d1" stroke-width="25.0" transform="translate(-0.37,-1.18)"/><use href="#c18" stroke="#dadada" stroke-width="23.4" transform="translate(-0.62,-1.96)"/><use href="#c18" stroke="#e3e3e3" stroke-width="21.4" transform="translate(-0.91,-2.87)"/><use href="#c18" stroke="#ebebeb" stroke-width="19.2" transform="translate(-1.24,-3.92)"/><use href="#c18" stroke="#f2f2f2" stroke-width="17.1" transform="translate(-1.57,-4.96)"/><use href="#c18" stroke="#f8f8f8" stroke-width="14.9" transform="translate(-1.90,-6.01)"/><use href="#c18" stroke="#fdfdfd" stroke-width="12.6" transform="translate(-2.23,-7.05)"/></g>
<g stroke-linecap="round"><use href="#c19" stroke="#bcbcbc" stroke-width="27.5"/><use href="#c19" stroke="#c7c7c7" stroke-width="26.4" transform="translate(-0.17,-0.52)"/><use href="#c19" stroke="#d1d1d1" stroke-width="25.0" transform="translate(-0.37,-1.18)"/><use href="#c19" stroke="#dadada" stroke-width="23.4" transform="translate(-0.62,-1.96)"/><use href="#c19" stroke="#e3e3e3" stroke-width="21.4" transform="translate(-0.91,-2.87)"/><use href="#c19" stroke="#ebebeb" stroke-width="19.2" transform="translate(-1.24,-3.92)"/><use href="#c19" stroke="#f2f2f2" stroke-width="17.1" transform="translate(-1.57,-4.96)"/><use href="#c19" stroke="#f8f8f8" stroke-width="14.9" transform="translate(-1.90,-6.01)"/><use href="#c19" stroke="#fdfdfd" stroke-width="12.6" transform="translate(-2.23,-7.05)"/></g>
<g stroke-linecap="round"><use href="#c20" stroke="#bcbcbc" stroke-width="27.5"/><use href="#c20" stroke="#c7c7c7" stroke-width="26.4" transform="translate(-0.17,-0.52)"/><use href="#c20" stroke="#d1d1d1" stroke-width="25.0" transform="translate(-0.37,-1.18)"/><use href="#c20" stroke="#dadada" stroke-width="23.4" transform="translate(-0.62,-1.96)"/><use href="#c20" stroke="#e3e3e3" stroke-width="21.4" transform="translate(-0.91,-2.87)"/><use href="#c20" stroke="#ebebeb" stroke-width="19.2" transform="translate(-1.24,-3.92)"/><use href="#c20" stroke="#f2f2f2" stroke-width="17.1" transform="translate(-1.57,-4.96)"/><use href="#c20" stroke="#f8f8f8" stroke-width="14.9" transform="translate(-1.90,-6.01)"/><use href="#c20" stroke="#fdfdfd" stroke-width="12.6" transform="translate(-2.23,-7.05)"/></g>
<g stroke-linecap="butt"><use href="#c21" stroke="#a3c8d8" stroke-width="22.5"/><use href="#c21" stroke="#b0d3e2" stroke-width="21.1" transform="translate(-0.20,-0.64)"/><use href="#c21" stroke="#bbdcea" stroke-width="19.4" transform="translate(-0.47,-1.50)"/><use href="#c21" stroke="#c3e2ee" stroke-width="16.6" transform="translate(-0.88,-2.78)"/><use href="#c21" stroke="#c9e6f1" stroke-width="13.1" transform="translate(-1.42,-4.49)"/></g>
<path d="M1011.4,980.0 C1013.2,977.8 1022.7,973.2 1025.5,971.4 C1028.2,969.7 1030.5,967.2 1033.2,966.0 C1036.0,964.7 1044.7,962.9 1047.3,961.3 C1049.8,959.7 1052.9,955.6 1053.5,953.5 C1054.1,951.4 1051.5,945.7 1051.9,944.2 C1052.4,942.6 1055.9,939.9 1057.4,941.0 C1058.9,942.2 1062.3,950.0 1063.6,953.5 C1064.9,957.0 1067.2,965.6 1067.8,969.1 C1068.5,972.6 1069.3,977.7 1069.1,981.6 C1068.9,985.4 1067.0,996.8 1066.3,1000.3 C1065.5,1003.7 1065.8,1006.9 1063.2,1008.8 C1060.5,1010.8 1047.4,1016.9 1044.9,1015.8 C1042.5,1014.8 1044.2,1003.0 1043.4,1000.3 C1042.5,997.5 1040.2,995.0 1037.9,994.0 C1035.7,993.0 1028.8,993.0 1025.5,992.5 C1022.1,991.9 1013.2,990.9 1011.4,989.3 C1009.7,987.8 1009.7,982.2 1011.4,980.0Z" fill="#c4e2ee" stroke="#b2d5e3" stroke-width="0.8"/>
<path d="M1006.8,959.7 L1012.2,967.5 L1034.8,983.1 L1009.9,980.3 L1005.2,969.1Z" fill="#f6f6f6" stroke="none"/>
<g stroke-linecap="round"><use href="#c22" stroke="#bcbcbc" stroke-width="29.5"/><use href="#c22" stroke="#c7c7c7" stroke-width="28.3" transform="translate(-0.18,-0.56)"/><use href="#c22" stroke="#d1d1d1" stroke-width="26.8" transform="translate(-0.40,-1.26)"/><use href="#c22" stroke="#dadada" stroke-width="25.1" transform="translate(-0.66,-2.10)"/><use href="#c22" stroke="#e3e3e3" stroke-width="23.0" transform="translate(-0.97,-3.08)"/><use href="#c22" stroke="#ebebeb" stroke-width="20.6" transform="translate(-1.33,-4.20)"/><use href="#c22" stroke="#f2f2f2" stroke-width="18.3" transform="translate(-1.68,-5.32)"/><use href="#c22" stroke="#f8f8f8" stroke-width="15.9" transform="translate(-2.04,-6.45)"/><use href="#c22" stroke="#fdfdfd" stroke-width="13.6" transform="translate(-2.39,-7.57)"/></g>
<g stroke-linecap="butt"><use href="#c23" stroke="#a3c8d8" stroke-width="31.0"/><use href="#c23" stroke="#b0d3e2" stroke-width="29.1" transform="translate(-0.28,-0.88)"/><use href="#c23" stroke="#bbdcea" stroke-width="26.7" transform="translate(-0.65,-2.06)"/><use href="#c23" stroke="#c3e2ee" stroke-width="22.9" transform="translate(-1.21,-3.83)"/><use href="#c23" stroke="#c9e6f1" stroke-width="18.0" transform="translate(-1.95,-6.18)"/></g>
<g stroke-linecap="butt"><use href="#c24" stroke="#a3c8d8" stroke-width="20.0"/><use href="#c24" stroke="#b0d3e2" stroke-width="18.8" transform="translate(-0.18,-0.57)"/><use href="#c24" stroke="#bbdcea" stroke-width="17.2" transform="translate(-0.42,-1.33)"/><use href="#c24" stroke="#c3e2ee" stroke-width="14.8" transform="translate(-0.78,-2.47)"/><use href="#c24" stroke="#c9e6f1" stroke-width="11.6" transform="translate(-1.26,-3.99)"/></g>
<g stroke-linecap="butt"><use href="#c25" stroke="#a3c8d8" stroke-width="29.0"/><use href="#c25" stroke="#b0d3e2" stroke-width="27.3" transform="translate(-0.26,-0.83)"/><use href="#c25" stroke="#bbdcea" stroke-width="24.9" transform="translate(-0.61,-1.93)"/><use href="#c25" stroke="#c3e2ee" stroke-width="21.5" transform="translate(-1.13,-3.58)"/><use href="#c25" stroke="#c9e6f1" stroke-width="16.8" transform="translate(-1.83,-5.79)"/></g>
<path d="M736.5,897.1 C738.5,894.3 746.5,894.3 748.8,897.1 C751.0,899.9 756.6,921.0 759.1,925.4 C761.7,929.7 770.8,937.6 774.2,940.4 C777.6,943.3 789.5,951.1 793.1,953.6 C796.6,956.2 808.0,964.2 810.0,965.9 C812.0,967.6 814.5,970.1 812.8,970.6 C811.1,971.1 795.0,967.6 793.1,970.6 C791.1,973.6 793.1,996.1 793.1,1000.7 C793.1,1005.4 794.2,1014.8 793.1,1016.8 C791.9,1018.7 785.6,1020.5 781.8,1020.5 C777.9,1020.5 757.5,1019.1 754.4,1016.8 C751.3,1014.4 751.8,1001.4 750.7,997.0 C749.5,992.5 744.5,977.4 743.1,972.5 C741.7,967.6 737.9,952.7 736.5,948.0 C735.1,943.3 729.0,930.5 729.0,925.4 C729.0,920.3 734.6,899.9 736.5,897.1Z" fill="#c4e2ee" stroke="#b2d5e3" stroke-width="0.8"/>
<path d="M710.1,895.2 L717.1,885.0 L742.2,899.4 L736.5,906.5Z" fill="#c4e2ee" stroke="none"/>
<g stroke-linecap="butt"><use href="#c26" stroke="#bcbcbc" stroke-width="17.0"/><use href="#c26" stroke="#c7c7c7" stroke-width="16.3" transform="translate(-0.10,-0.32)"/><use href="#c26" stroke="#d1d1d1" stroke-width="15.5" transform="translate(-0.23,-0.73)"/><use href="#c26" stroke="#dadada" stroke-width="14.4" transform="translate(-0.38,-1.21)"/><use href="#c26" stroke="#e3e3e3" stroke-width="13.3" transform="translate(-0.56,-1.78)"/><use href="#c26" stroke="#ebebeb" stroke-width="11.9" transform="translate(-0.76,-2.42)"/><use href="#c26" stroke="#f2f2f2" stroke-width="10.5" transform="translate(-0.97,-3.07)"/><use href="#c26" stroke="#f8f8f8" stroke-width="9.2" transform="translate(-1.17,-3.71)"/><use href="#c26" stroke="#fdfdfd" stroke-width="7.8" transform="translate(-1.38,-4.36)"/></g>
<g stroke-linecap="round"><use href="#c27" stroke="#bcbcbc" stroke-width="33.0"/><use href="#c27" stroke="#c7c7c7" stroke-width="31.7" transform="translate(-0.20,-0.63)"/><use href="#c27" stroke="#d1d1d1" stroke-width="30.0" transform="translate(-0.45,-1.41)"/><use href="#c27" stroke="#dadada" stroke-width="28.1" transform="translate(-0.74,-2.35)"/><use href="#c27" stroke="#e3e3e3" stroke-width="25.7" transform="translate(-1.09,-3.45)"/><use href="#c27" stroke="#ebebeb" stroke-width="23.1" transform="translate(-1.49,-4.70)"/><use href="#c27" stroke="#f2f2f2" stroke-width="20.5" transform="translate(-1.88,-5.96)"/><use href="#c27" stroke="#f8f8f8" stroke-width="17.8" transform="translate(-2.28,-7.21)"/><use href="#c27" stroke="#fdfdfd" stroke-width="15.2" transform="translate(-2.67,-8.46)"/></g>
<g stroke-linecap="round"><use href="#c28" stroke="#b6b6b6" stroke-width="20.0"/><use href="#c28" stroke="#c4c4c4" stroke-width="18.8" transform="translate(-0.18,-0.57)"/><use href="#c28" stroke="#d0d0d0" stroke-width="17.2" transform="translate(-0.42,-1.33)"/><use href="#c28" stroke="#dadada" stroke-width="15.2" transform="translate(-0.72,-2.28)"/><use href="#c28" stroke="#e3e3e3" stroke-width="12.8" transform="translate(-1.08,-3.42)"/><use href="#c28" stroke="#e9e9e9" stroke-width="10.4" transform="translate(-1.44,-4.56)"/></g>
<g stroke-linecap="round"><use href="#c29" stroke="#b6b6b6" stroke-width="20.0"/><use href="#c29" stroke="#c4c4c4" stroke-width="18.8" transform="translate(-0.18,-0.57)"/><use href="#c29" stroke="#d0d0d0" stroke-width="17.2" transform="translate(-0.42,-1.33)"/><use href="#c29" stroke="#dadada" stroke-width="15.2" transform="translate(-0.72,-2.28)"/><use href="#c29" stroke="#e3e3e3" stroke-width="12.8" transform="translate(-1.08,-3.42)"/><use href="#c29" stroke="#e9e9e9" stroke-width="10.4" transform="translate(-1.44,-4.56)"/></g>
<g stroke-linecap="round"><use href="#c30" stroke="#b6b6b6" stroke-width="20.0"/><use href="#c30" stroke="#c4c4c4" stroke-width="18.8" transform="translate(-0.18,-0.57)"/><use href="#c30" stroke="#d0d0d0" stroke-width="17.2" transform="translate(-0.42,-1.33)"/><use href="#c30" stroke="#dadada" stroke-width="15.2" transform="translate(-0.72,-2.28)"/><use href="#c30" stroke="#e3e3e3" stroke-width="12.8" transform="translate(-1.08,-3.42)"/><use href="#c30" stroke="#e9e9e9" stroke-width="10.4" transform="translate(-1.44,-4.56)"/></g>
<g stroke-linecap="round"><use href="#c31" stroke="#b6b6b6" stroke-width="20.0"/><use href="#c31" stroke="#c4c4c4" stroke-width="18.8" transform="translate(-0.18,-0.57)"/><use href="#c31" stroke="#d0d0d0" stroke-width="17.2" transform="translate(-0.42,-1.33)"/><use href="#c31" stroke="#dadada" stroke-width="15.2" transform="translate(-0.72,-2.28)"/><use href="#c31" stroke="#e3e3e3" stroke-width="12.8" transform="translate(-1.08,-3.42)"/><use href="#c31" stroke="#e9e9e9" stroke-width="10.4" transform="translate(-1.44,-4.56)"/></g>
<g stroke-linecap="round"><use href="#c32" stroke="#b6b6b6" stroke-width="20.0"/><use href="#c32" stroke="#c4c4c4" stroke-width="18.8" transform="translate(-0.18,-0.57)"/><use href="#c32" stroke="#d0d0d0" stroke-width="17.2" transform="translate(-0.42,-1.33)"/><use href="#c32" stroke="#dadada" stroke-width="15.2" transform="translate(-0.72,-2.28)"/><use href="#c32" stroke="#e3e3e3" stroke-width="12.8" transform="translate(-1.08,-3.42)"/><use href="#c32" stroke="#e9e9e9" stroke-width="10.4" transform="translate(-1.44,-4.56)"/></g>
<g stroke-linecap="round"><use href="#c33" stroke="#bcbcbc" stroke-width="29.0"/><use href="#c33" stroke="#c7c7c7" stroke-width="27.8" transform="translate(-0.17,-0.55)"/><use href="#c33" stroke="#d1d1d1" stroke-width="26.4" transform="translate(-0.39,-1.24)"/><use href="#c33" stroke="#dadada" stroke-width="24.6" transform="translate(-0.65,-2.07)"/><use href="#c33" stroke="#e3e3e3" stroke-width="22.6" transform="translate(-0.96,-3.03)"/><use href="#c33" stroke="#ebebeb" stroke-width="20.3" transform="translate(-1.30,-4.13)"/><use href="#c33" stroke="#f2f2f2" stroke-width="18.0" transform="translate(-1.65,-5.23)"/><use href="#c33" stroke="#f8f8f8" stroke-width="15.7" transform="translate(-2.00,-6.34)"/><use href="#c33" stroke="#fdfdfd" stroke-width="13.3" transform="translate(-2.35,-7.44)"/></g>
<g stroke-linecap="round"><use href="#c34" stroke="#bcbcbc" stroke-width="30.0"/><use href="#c34" stroke="#c7c7c7" stroke-width="28.8" transform="translate(-0.18,-0.57)"/><use href="#c34" stroke="#d1d1d1" stroke-width="27.3" transform="translate(-0.40,-1.28)"/><use href="#c34" stroke="#dadada" stroke-width="25.5" transform="translate(-0.67,-2.14)"/><use href="#c34" stroke="#e3e3e3" stroke-width="23.4" transform="translate(-0.99,-3.13)"/><use href="#c34" stroke="#ebebeb" stroke-width="21.0" transform="translate(-1.35,-4.27)"/><use href="#c34" stroke="#f2f2f2" stroke-width="18.6" transform="translate(-1.71,-5.42)"/><use href="#c34" stroke="#f8f8f8" stroke-width="16.2" transform="translate(-2.07,-6.55)"/><use href="#c34" stroke="#fdfdfd" stroke-width="13.8" transform="translate(-2.43,-7.70)"/></g>
<g stroke-linecap="round"><use href="#c35" stroke="#bcbcbc" stroke-width="30.0"/><use href="#c35" stroke="#c7c7c7" stroke-width="28.8" transform="translate(-0.18,-0.57)"/><use href="#c35" stroke="#d1d1d1" stroke-width="27.3" transform="translate(-0.40,-1.28)"/><use href="#c35" stroke="#dadada" stroke-width="25.5" transform="translate(-0.67,-2.14)"/><use href="#c35" stroke="#e3e3e3" stroke-width="23.4" transform="translate(-0.99,-3.13)"/><use href="#c35" stroke="#ebebeb" stroke-width="21.0" transform="translate(-1.35,-4.27)"/><use href="#c35" stroke="#f2f2f2" stroke-width="18.6" transform="translate(-1.71,-5.42)"/><use href="#c35" stroke="#f8f8f8" stroke-width="16.2" transform="translate(-2.07,-6.55)"/><use href="#c35" stroke="#fdfdfd" stroke-width="13.8" transform="translate(-2.43,-7.70)"/></g>
<g stroke-linecap="round"><use href="#c36" stroke="#bcbcbc" stroke-width="30.0"/><use href="#c36" stroke="#c7c7c7" stroke-width="28.8" transform="translate(-0.18,-0.57)"/><use href="#c36" stroke="#d1d1d1" stroke-width="27.3" transform="translate(-0.40,-1.28)"/><use href="#c36" stroke="#dadada" stroke-width="25.5" transform="translate(-0.67,-2.14)"/><use href="#c36" stroke="#e3e3e3" stroke-width="23.4" transform="translate(-0.99,-3.13)"/><use href="#c36" stroke="#ebebeb" stroke-width="21.0" transform="translate(-1.35,-4.27)"/><use href="#c36" stroke="#f2f2f2" stroke-width="18.6" transform="translate(-1.71,-5.42)"/><use href="#c36" stroke="#f8f8f8" stroke-width="16.2" transform="translate(-2.07,-6.55)"/><use href="#c36" stroke="#fdfdfd" stroke-width="13.8" transform="translate(-2.43,-7.70)"/></g>
<g stroke-linecap="round"><use href="#c37" stroke="#bcbcbc" stroke-width="30.0"/><use href="#c37" stroke="#c7c7c7" stroke-width="28.8" transform="translate(-0.18,-0.57)"/><use href="#c37" stroke="#d1d1d1" stroke-width="27.3" transform="translate(-0.40,-1.28)"/><use href="#c37" stroke="#dadada" stroke-width="25.5" transform="translate(-0.67,-2.14)"/><use href="#c37" stroke="#e3e3e3" stroke-width="23.4" transform="translate(-0.99,-3.13)"/><use href="#c37" stroke="#ebebeb" stroke-width="21.0" transform="translate(-1.35,-4.27)"/><use href="#c37" stroke="#f2f2f2" stroke-width="18.6" transform="translate(-1.71,-5.42)"/><use href="#c37" stroke="#f8f8f8" stroke-width="16.2" transform="translate(-2.07,-6.55)"/><use href="#c37" stroke="#fdfdfd" stroke-width="13.8" transform="translate(-2.43,-7.70)"/></g>
<g stroke-linecap="round"><use href="#c38" stroke="#bcbcbc" stroke-width="21.0"/><use href="#c38" stroke="#c7c7c7" stroke-width="20.2" transform="translate(-0.13,-0.40)"/><use href="#c38" stroke="#d1d1d1" stroke-width="19.1" transform="translate(-0.28,-0.90)"/><use href="#c38" stroke="#dadada" stroke-width="17.8" transform="translate(-0.47,-1.50)"/><use href="#c38" stroke="#e3e3e3" stroke-width="16.4" transform="translate(-0.69,-2.19)"/><use href="#c38" stroke="#ebebeb" stroke-width="14.7" transform="translate(-0.94,-2.99)"/><use href="#c38" stroke="#f2f2f2" stroke-width="13.0" transform="translate(-1.20,-3.79)"/><use href="#c38" stroke="#f8f8f8" stroke-width="11.3" transform="translate(-1.45,-4.59)"/><use href="#c38" stroke="#fdfdfd" stroke-width="9.7" transform="translate(-1.70,-5.39)"/></g>
<g stroke-linecap="butt"><use href="#c39" stroke="#bcbcbc" stroke-width="28.5"/><use href="#c39" stroke="#c7c7c7" stroke-width="27.4" transform="translate(-0.17,-0.54)"/><use href="#c39" stroke="#d1d1d1" stroke-width="25.9" transform="translate(-0.38,-1.22)"/><use href="#c39" stroke="#dadada" stroke-width="24.2" transform="translate(-0.64,-2.03)"/><use href="#c39" stroke="#e3e3e3" stroke-width="22.2" transform="translate(-0.94,-2.98)"/><use href="#c39" stroke="#ebebeb" stroke-width="19.9" transform="translate(-1.28,-4.06)"/><use href="#c39" stroke="#f2f2f2" stroke-width="17.7" transform="translate(-1.62,-5.14)"/><use href="#c39" stroke="#f8f8f8" stroke-width="15.4" transform="translate(-1.97,-6.23)"/><use href="#c39" stroke="#fdfdfd" stroke-width="13.1" transform="translate(-2.31,-7.31)"/></g>
<g stroke-linecap="butt"><use href="#c40" stroke="#a3c8d8" stroke-width="20.0"/><use href="#c40" stroke="#b0d3e2" stroke-width="18.8" transform="translate(-0.18,-0.57)"/><use href="#c40" stroke="#bbdcea" stroke-width="17.2" transform="translate(-0.42,-1.33)"/><use href="#c40" stroke="#c3e2ee" stroke-width="14.8" transform="translate(-0.78,-2.47)"/><use href="#c40" stroke="#c9e6f1" stroke-width="11.6" transform="translate(-1.26,-3.99)"/></g>
<g stroke-linecap="butt"><use href="#c41" stroke="#a3c8d8" stroke-width="21.0"/><use href="#c41" stroke="#b0d3e2" stroke-width="19.7" transform="translate(-0.19,-0.60)"/><use href="#c41" stroke="#bbdcea" stroke-width="18.1" transform="translate(-0.44,-1.40)"/><use href="#c41" stroke="#c3e2ee" stroke-width="15.5" transform="translate(-0.82,-2.59)"/><use href="#c41" stroke="#c9e6f1" stroke-width="12.2" transform="translate(-1.32,-4.19)"/></g>
<path d="M999.1,1234.5 C1000.6,1231.4 1008.1,1226.8 1010.9,1225.5 C1013.8,1224.1 1019.1,1221.8 1021.8,1223.6 C1024.5,1225.5 1032.6,1235.2 1032.7,1240.0 C1032.8,1244.8 1025.0,1258.4 1022.7,1261.8 C1020.5,1265.2 1017.3,1266.5 1014.5,1267.3 C1011.8,1268.1 1002.8,1270.2 1000.9,1268.2 C999.0,1266.1 999.3,1255.1 999.1,1250.9 C998.9,1246.7 997.6,1237.7 999.1,1234.5Z" fill="#c4e2ee" stroke="#b2d5e3" stroke-width="0.8"/>
<g stroke-linecap="butt"><use href="#c42" stroke="#a3c8d8" stroke-width="30.0"/><use href="#c42" stroke="#b0d3e2" stroke-width="28.2" transform="translate(-0.27,-0.85)"/><use href="#c42" stroke="#bbdcea" stroke-width="25.8" transform="translate(-0.63,-1.99)"/><use href="#c42" stroke="#c3e2ee" stroke-width="22.2" transform="translate(-1.17,-3.71)"/><use href="#c42" stroke="#c9e6f1" stroke-width="17.4" transform="translate(-1.89,-5.98)"/></g>
<g stroke-linecap="butt"><use href="#c43" stroke="#a3c8d8" stroke-width="31.0"/><use href="#c43" stroke="#b0d3e2" stroke-width="29.1" transform="translate(-0.28,-0.88)"/><use href="#c43" stroke="#bbdcea" stroke-width="26.7" transform="translate(-0.65,-2.06)"/><use href="#c43" stroke="#c3e2ee" stroke-width="22.9" transform="translate(-1.21,-3.83)"/><use href="#c43" stroke="#c9e6f1" stroke-width="18.0" transform="translate(-1.95,-6.18)"/></g>
<path d="M1067.3,1214.5 C1069.5,1213.4 1077.0,1219.7 1080.0,1221.8 C1083.0,1223.9 1090.2,1227.4 1091.3,1231.3 C1092.3,1235.1 1089.9,1247.8 1088.2,1252.7 C1086.4,1257.7 1080.3,1266.8 1077.3,1270.9 C1074.2,1275.0 1066.5,1284.5 1063.6,1285.5 C1060.8,1286.4 1056.1,1281.1 1054.5,1278.2 C1053.0,1275.2 1050.5,1265.7 1050.9,1261.8 C1051.4,1258.0 1056.8,1251.1 1058.2,1247.3 C1059.5,1243.4 1060.7,1235.0 1061.8,1230.9 C1063.0,1226.8 1065.0,1215.7 1067.3,1214.5Z" fill="#c4e2ee" stroke="#b2d5e3" stroke-width="0.8"/>
<g stroke-linecap="butt"><use href="#c44" stroke="#a3c8d8" stroke-width="24.0"/><use href="#c44" stroke="#b0d3e2" stroke-width="22.6" transform="translate(-0.22,-0.68)"/><use href="#c44" stroke="#bbdcea" stroke-width="20.6" transform="translate(-0.50,-1.60)"/><use href="#c44" stroke="#c3e2ee" stroke-width="17.8" transform="translate(-0.94,-2.96)"/><use href="#c44" stroke="#c9e6f1" stroke-width="13.9" transform="translate(-1.51,-4.79)"/></g>
<g stroke-linecap="round"><use href="#c45" stroke="#989898" stroke-width="28.0"/><use href="#c45" stroke="#a2a2a2" stroke-width="25.2" transform="translate(-0.42,-1.33)"/><use href="#c45" stroke="#a9a9a9" stroke-width="21.0" transform="translate(-1.05,-3.32)"/><use href="#c45" stroke="#afafaf" stroke-width="16.2" transform="translate(-1.76,-5.59)"/></g>
<g stroke-linecap="round"><use href="#c46" stroke="#989898" stroke-width="28.0"/><use href="#c46" stroke="#a2a2a2" stroke-width="25.2" transform="translate(-0.42,-1.33)"/><use href="#c46" stroke="#a9a9a9" stroke-width="21.0" transform="translate(-1.05,-3.32)"/><use href="#c46" stroke="#afafaf" stroke-width="16.2" transform="translate(-1.76,-5.59)"/></g>
<g stroke-linecap="round"><use href="#c47" stroke="#989898" stroke-width="28.0"/><use href="#c47" stroke="#a2a2a2" stroke-width="25.2" transform="translate(-0.42,-1.33)"/><use href="#c47" stroke="#a9a9a9" stroke-width="21.0" transform="translate(-1.05,-3.32)"/><use href="#c47" stroke="#afafaf" stroke-width="16.2" transform="translate(-1.76,-5.59)"/></g>
<g stroke-linecap="round"><use href="#c48" stroke="#989898" stroke-width="28.0"/><use href="#c48" stroke="#a2a2a2" stroke-width="25.2" transform="translate(-0.42,-1.33)"/><use href="#c48" stroke="#a9a9a9" stroke-width="21.0" transform="translate(-1.05,-3.32)"/><use href="#c48" stroke="#afafaf" stroke-width="16.2" transform="translate(-1.76,-5.59)"/></g>
<g stroke-linecap="round"><use href="#c49" stroke="#989898" stroke-width="28.0"/><use href="#c49" stroke="#a2a2a2" stroke-width="25.2" transform="translate(-0.42,-1.33)"/><use href="#c49" stroke="#a9a9a9" stroke-width="21.0" transform="translate(-1.05,-3.32)"/><use href="#c49" stroke="#afafaf" stroke-width="16.2" transform="translate(-1.76,-5.59)"/></g>
<g stroke-linecap="round"><use href="#c50" stroke="#b6b6b6" stroke-width="18.0"/><use href="#c50" stroke="#c4c4c4" stroke-width="16.9" transform="translate(-0.16,-0.51)"/><use href="#c50" stroke="#d0d0d0" stroke-width="15.5" transform="translate(-0.38,-1.20)"/><use href="#c50" stroke="#dadada" stroke-width="13.7" transform="translate(-0.65,-2.05)"/><use href="#c50" stroke="#e3e3e3" stroke-width="11.5" transform="translate(-0.97,-3.08)"/><use href="#c50" stroke="#e9e9e9" stroke-width="9.4" transform="translate(-1.30,-4.10)"/></g>
<g stroke-linecap="round"><use href="#c51" stroke="#b6b6b6" stroke-width="18.0"/><use href="#c51" stroke="#c4c4c4" stroke-width="16.9" transform="translate(-0.16,-0.51)"/><use href="#c51" stroke="#d0d0d0" stroke-width="15.5" transform="translate(-0.38,-1.20)"/><use href="#c51" stroke="#dadada" stroke-width="13.7" transform="translate(-0.65,-2.05)"/><use href="#c51" stroke="#e3e3e3" stroke-width="11.5" transform="translate(-0.97,-3.08)"/><use href="#c51" stroke="#e9e9e9" stroke-width="9.4" transform="translate(-1.30,-4.10)"/></g>
<g stroke-linecap="round"><use href="#c52" stroke="#b6b6b6" stroke-width="18.0"/><use href="#c52" stroke="#c4c4c4" stroke-width="16.9" transform="translate(-0.16,-0.51)"/><use href="#c52" stroke="#d0d0d0" stroke-width="15.5" transform="translate(-0.38,-1.20)"/><use href="#c52" stroke="#dadada" stroke-width="13.7" transform="translate(-0.65,-2.05)"/><use href="#c52" stroke="#e3e3e3" stroke-width="11.5" transform="translate(-0.97,-3.08)"/><use href="#c52" stroke="#e9e9e9" stroke-width="9.4" transform="translate(-1.30,-4.10)"/></g>
<g stroke-linecap="round"><use href="#c53" stroke="#b6b6b6" stroke-width="18.0"/><use href="#c53" stroke="#c4c4c4" stroke-width="16.9" transform="translate(-0.16,-0.51)"/><use href="#c53" stroke="#d0d0d0" stroke-width="15.5" transform="translate(-0.38,-1.20)"/><use href="#c53" stroke="#dadada" stroke-width="13.7" transform="translate(-0.65,-2.05)"/><use href="#c53" stroke="#e3e3e3" stroke-width="11.5" transform="translate(-0.97,-3.08)"/><use href="#c53" stroke="#e9e9e9" stroke-width="9.4" transform="translate(-1.30,-4.10)"/></g>
<g stroke-linecap="round"><use href="#c54" stroke="#b6b6b6" stroke-width="20.0"/><use href="#c54" stroke="#c4c4c4" stroke-width="18.8" transform="translate(-0.18,-0.57)"/><use href="#c54" stroke="#d0d0d0" stroke-width="17.2" transform="translate(-0.42,-1.33)"/><use href="#c54" stroke="#dadada" stroke-width="15.2" transform="translate(-0.72,-2.28)"/><use href="#c54" stroke="#e3e3e3" stroke-width="12.8" transform="translate(-1.08,-3.42)"/><use href="#c54" stroke="#e9e9e9" stroke-width="10.4" transform="translate(-1.44,-4.56)"/></g>
<g stroke-linecap="butt"><use href="#c55" stroke="#bcbcbc" stroke-width="28.0"/><use href="#c55" stroke="#c7c7c7" stroke-width="26.9" transform="translate(-0.17,-0.53)"/><use href="#c55" stroke="#d1d1d1" stroke-width="25.5" transform="translate(-0.38,-1.20)"/><use href="#c55" stroke="#dadada" stroke-width="23.8" transform="translate(-0.63,-1.99)"/><use href="#c55" stroke="#e3e3e3" stroke-width="21.8" transform="translate(-0.92,-2.93)"/><use href="#c55" stroke="#ebebeb" stroke-width="19.6" transform="translate(-1.26,-3.99)"/><use href="#c55" stroke="#f2f2f2" stroke-width="17.4" transform="translate(-1.60,-5.05)"/><use href="#c55" stroke="#f8f8f8" stroke-width="15.1" transform="translate(-1.93,-6.12)"/><use href="#c55" stroke="#fdfdfd" stroke-width="12.9" transform="translate(-2.27,-7.18)"/></g>
<g stroke-linecap="round"><use href="#c56" stroke="#bcbcbc" stroke-width="30.0"/><use href="#c56" stroke="#c7c7c7" stroke-width="28.8" transform="translate(-0.18,-0.57)"/><use href="#c56" stroke="#d1d1d1" stroke-width="27.3" transform="translate(-0.40,-1.28)"/><use href="#c56" stroke="#dadada" stroke-width="25.5" transform="translate(-0.67,-2.14)"/><use href="#c56" stroke="#e3e3e3" stroke-width="23.4" transform="translate(-0.99,-3.13)"/><use href="#c56" stroke="#ebebeb" stroke-width="21.0" transform="translate(-1.35,-4.27)"/><use href="#c56" stroke="#f2f2f2" stroke-width="18.6" transform="translate(-1.71,-5.42)"/><use href="#c56" stroke="#f8f8f8" stroke-width="16.2" transform="translate(-2.07,-6.55)"/><use href="#c56" stroke="#fdfdfd" stroke-width="13.8" transform="translate(-2.43,-7.70)"/></g>
<g stroke-linecap="round"><use href="#c57" stroke="#bcbcbc" stroke-width="30.0"/><use href="#c57" stroke="#c7c7c7" stroke-width="28.8" transform="translate(-0.18,-0.57)"/><use href="#c57" stroke="#d1d1d1" stroke-width="27.3" transform="translate(-0.40,-1.28)"/><use href="#c57" stroke="#dadada" stroke-width="25.5" transform="translate(-0.67,-2.14)"/><use href="#c57" stroke="#e3e3e3" stroke-width="23.4" transform="translate(-0.99,-3.13)"/><use href="#c57" stroke="#ebebeb" stroke-width="21.0" transform="translate(-1.35,-4.27)"/><use href="#c57" stroke="#f2f2f2" stroke-width="18.6" transform="translate(-1.71,-5.42)"/><use href="#c57" stroke="#f8f8f8" stroke-width="16.2" transform="translate(-2.07,-6.55)"/><use href="#c57" stroke="#fdfdfd" stroke-width="13.8" transform="translate(-2.43,-7.70)"/></g>
<g stroke-linecap="round"><use href="#c58" stroke="#bcbcbc" stroke-width="30.0"/><use href="#c58" stroke="#c7c7c7" stroke-width="28.8" transform="translate(-0.18,-0.57)"/><use href="#c58" stroke="#d1d1d1" stroke-width="27.3" transform="translate(-0.40,-1.28)"/><use href="#c58" stroke="#dadada" stroke-width="25.5" transform="translate(-0.67,-2.14)"/><use href="#c58" stroke="#e3e3e3" stroke-width="23.4" transform="translate(-0.99,-3.13)"/><use href="#c58" stroke="#ebebeb" stroke-width="21.0" transform="translate(-1.35,-4.27)"/><use href="#c58" stroke="#f2f2f2" stroke-width="18.6" transform="translate(-1.71,-5.42)"/><use href="#c58" stroke="#f8f8f8" stroke-width="16.2" transform="translate(-2.07,-6.55)"/><use href="#c58" stroke="#fdfdfd" stroke-width="13.8" transform="translate(-2.43,-7.70)"/></g>
<g stroke-linecap="round"><use href="#c59" stroke="#bcbcbc" stroke-width="30.0"/><use href="#c59" stroke="#c7c7c7" stroke-width="28.8" transform="translate(-0.18,-0.57)"/><use href="#c59" stroke="#d1d1d1" stroke-width="27.3" transform="translate(-0.40,-1.28)"/><use href="#c59" stroke="#dadada" stroke-width="25.5" transform="translate(-0.67,-2.14)"/><use href="#c59" stroke="#e3e3e3" stroke-width="23.4" transform="translate(-0.99,-3.13)"/><use href="#c59" stroke="#ebebeb" stroke-width="21.0" transform="translate(-1.35,-4.27)"/><use href="#c59" stroke="#f2f2f2" stroke-width="18.6" transform="translate(-1.71,-5.42)"/><use href="#c59" stroke="#f8f8f8" stroke-width="16.2" transform="translate(-2.07,-6.55)"/><use href="#c59" stroke="#fdfdfd" stroke-width="13.8" transform="translate(-2.43,-7.70)"/></g>
<g stroke-linecap="round"><use href="#c60" stroke="#bcbcbc" stroke-width="30.5"/><use href="#c60" stroke="#c7c7c7" stroke-width="29.3" transform="translate(-0.18,-0.58)"/><use href="#c60" stroke="#d1d1d1" stroke-width="27.8" transform="translate(-0.41,-1.30)"/><use href="#c60" stroke="#dadada" stroke-width="25.9" transform="translate(-0.69,-2.17)"/><use href="#c60" stroke="#e3e3e3" stroke-width="23.8" transform="translate(-1.01,-3.19)"/><use href="#c60" stroke="#ebebeb" stroke-width="21.3" transform="translate(-1.37,-4.35)"/><use href="#c60" stroke="#f2f2f2" stroke-width="18.9" transform="translate(-1.74,-5.51)"/><use href="#c60" stroke="#f8f8f8" stroke-width="16.5" transform="translate(-2.10,-6.66)"/><use href="#c60" stroke="#fdfdfd" stroke-width="14.0" transform="translate(-2.47,-7.82)"/></g>
<g stroke-linecap="butt"><use href="#c61" stroke="#a3c8d8" stroke-width="32.0"/><use href="#c61" stroke="#b0d3e2" stroke-width="30.1" transform="translate(-0.29,-0.91)"/><use href="#c61" stroke="#bbdcea" stroke-width="27.5" transform="translate(-0.67,-2.13)"/><use href="#c61" stroke="#c3e2ee" stroke-width="23.7" transform="translate(-1.25,-3.95)"/><use href="#c61" stroke="#c9e6f1" stroke-width="18.6" transform="translate(-2.02,-6.38)"/></g>
<g stroke-linecap="round"><use href="#c62" stroke="#a3c8d8" stroke-width="30.0"/><use href="#c62" stroke="#b0d3e2" stroke-width="28.2" transform="translate(-0.27,-0.85)"/><use href="#c62" stroke="#bbdcea" stroke-width="25.8" transform="translate(-0.63,-1.99)"/><use href="#c62" stroke="#c3e2ee" stroke-width="22.2" transform="translate(-1.17,-3.71)"/><use href="#c62" stroke="#c9e6f1" stroke-width="17.4" transform="translate(-1.89,-5.98)"/></g>
<path d="M751.6,1155.4 C755.6,1152.5 777.6,1145.0 781.8,1146.0 C785.9,1146.9 790.4,1160.8 793.1,1164.8 C795.7,1168.8 807.4,1180.8 808.1,1185.5 C808.9,1190.2 802.9,1210.6 800.6,1211.9 C798.3,1213.2 788.5,1199.7 785.5,1198.7 C782.5,1197.8 773.4,1200.6 770.4,1202.5 C767.5,1204.3 759.6,1218.0 756.3,1217.2 C753.0,1216.3 738.9,1198.3 737.5,1194.0 C736.1,1189.7 740.8,1178.1 742.2,1174.2 C743.6,1170.4 747.6,1158.2 751.6,1155.4Z" fill="#c4e2ee" stroke="#b2d5e3" stroke-width="0.8"/>
<g stroke-linecap="butt"><use href="#c63" stroke="#a3c8d8" stroke-width="28.0"/><use href="#c63" stroke="#b0d3e2" stroke-width="26.3" transform="translate(-0.25,-0.80)"/><use href="#c63" stroke="#bbdcea" stroke-width="24.1" transform="translate(-0.59,-1.86)"/><use href="#c63" stroke="#c3e2ee" stroke-width="20.7" transform="translate(-1.09,-3.46)"/><use href="#c63" stroke="#c9e6f1" stroke-width="16.2" transform="translate(-1.76,-5.59)"/></g>
<g stroke-linecap="butt"><use href="#c64" stroke="#a3c8d8" stroke-width="28.0"/><use href="#c64" stroke="#b0d3e2" stroke-width="26.3" transform="translate(-0.25,-0.80)"/><use href="#c64" stroke="#bbdcea" stroke-width="24.1" transform="translate(-0.59,-1.86)"/><use href="#c64" stroke="#c3e2ee" stroke-width="20.7" transform="translate(-1.09,-3.46)"/><use href="#c64" stroke="#c9e6f1" stroke-width="16.2" transform="translate(-1.76,-5.59)"/></g>
<g stroke-linecap="butt"><use href="#c65" stroke="#a3c8d8" stroke-width="24.0"/><use href="#c65" stroke="#b0d3e2" stroke-width="22.6" transform="translate(-0.22,-0.68)"/><use href="#c65" stroke="#bbdcea" stroke-width="20.6" transform="translate(-0.50,-1.60)"/><use href="#c65" stroke="#c3e2ee" stroke-width="17.8" transform="translate(-0.94,-2.96)"/><use href="#c65" stroke="#c9e6f1" stroke-width="13.9" transform="translate(-1.51,-4.79)"/></g>
<path d="M873.1,1479.5 L884.8,1469.4 L901.7,1475.8 L893.8,1488.6Z" fill="#c4e2ee" stroke="none"/>
<g stroke-linecap="butt"><use href="#c66" stroke="#bcbcbc" stroke-width="31.0"/><use href="#c66" stroke="#c7c7c7" stroke-width="29.8" transform="translate(-0.19,-0.59)"/><use href="#c66" stroke="#d1d1d1" stroke-width="28.2" transform="translate(-0.42,-1.33)"/><use href="#c66" stroke="#dadada" stroke-width="26.3" transform="translate(-0.70,-2.21)"/><use href="#c66" stroke="#e3e3e3" stroke-width="24.2" transform="translate(-1.02,-3.24)"/><use href="#c66" stroke="#ebebeb" stroke-width="21.7" transform="translate(-1.39,-4.42)"/><use href="#c66" stroke="#f2f2f2" stroke-width="19.2" transform="translate(-1.77,-5.60)"/><use href="#c66" stroke="#f8f8f8" stroke-width="16.7" transform="translate(-2.14,-6.77)"/><use href="#c66" stroke="#fdfdfd" stroke-width="14.3" transform="translate(-2.51,-7.95)"/></g>
<path d="M425.1,1629.3 L434.5,1635.0 L420.5,1659.0 L409.4,1650.3Z" fill="#f7f7f7" stroke="none"/>
<path d="M849.1,1617.7 C846.7,1614.5 851.7,1597.9 853.9,1592.9 C856.2,1587.9 867.5,1568.8 871.4,1567.6 C875.3,1566.4 891.4,1576.8 892.5,1580.9 C893.7,1584.9 884.3,1603.7 882.9,1608.0 C881.4,1612.4 881.4,1623.3 878.0,1624.3 C874.7,1625.3 851.5,1620.8 849.1,1617.7Z" fill="#c4e2ee" stroke="#b2d5e3" stroke-width="0.8"/>
</g>
<!--/CABLES-->
<!--PATTERN-->
<defs>
<linearGradient id="gOr" x1="0" y1="0" x2="1" y2="0.3"><stop offset="0" stop-color="#ff9a00"/><stop offset="0.6" stop-color="#ffb400"/><stop offset="1" stop-color="#ffd21a"/></linearGradient>
<linearGradient id="gWh" x1="0" y1="0" x2="0" y2="1"><stop offset="0" stop-color="#ffffff"/><stop offset="1" stop-color="#c9c9c9"/></linearGradient>
<linearGradient id="gDk" x1="0" y1="0" x2="1" y2="0"><stop offset="0" stop-color="#3a3a3a"/><stop offset="0.6" stop-color="#a0a0a0"/><stop offset="1" stop-color="#f0f0f0"/></linearGradient>
<radialGradient id="gDot" cx="0.5" cy="0.35" r="0.7"><stop offset="0" stop-color="#ffc61a"/><stop offset="1" stop-color="#ff9800"/></radialGradient>
<linearGradient id="gSkin" x1="0" y1="0" x2="0" y2="1"><stop offset="0" stop-color="#ffd8a0"/><stop offset="1" stop-color="#f9a878"/></linearGradient>
<radialGradient id="gGlobe" cx="0.4" cy="0.35" r="0.75"><stop offset="0" stop-color="#ffc21a"/><stop offset="1" stop-color="#f08a10"/></radialGradient>
<g id="eye"><path d="M0,5.5 Q8,-3.5 17,4 Q9,12 0,5.5Z" fill="#111"/><path d="M1.5,5.8 Q8,10.5 15.5,4.5 Q9,8 1.5,5.8Z" fill="#e8e8e8"/><circle cx="8.3" cy="4.6" r="3.3" fill="#111"/><circle cx="9.6" cy="3.4" r="1.1" fill="#eee"/><path d="M-0.5,3.5 Q7,-5 17.5,1.5" stroke="#111" stroke-width="1.3" fill="none"/></g>
<path id="tee" d="M-9,-19 Q0,-12 9,-19 L21,-11 L15,-1.5 L10.5,-4 L10.5,18 L-10.5,18 L-10.5,-4 L-15,-1.5 L-21,-11Z"/>
<g id="fab"><path d="M-18,-8 L-4,-9 L-8,12 L-15,11Z" fill="#f2f2f2"/><path d="M-12,8 Q0,4 12,8 Q8,15 -2,14 Q-10,13 -12,8Z" fill="#dcdcdc"/></g>
</defs>
<rect x="91.0" y="274.2" width="51.6" height="51.6" rx="3" fill="none" stroke="#2c2c2e" stroke-width="1.2" opacity="0.7"/>
<rect x="92.55" y="275.75" width="48.5" height="48.5" rx="2" fill="#444446" fill-opacity="0.82" stroke="#5f5f62" stroke-width="1.5"/>
<rect x="91.0" y="350.2" width="51.6" height="51.6" rx="3" fill="none" stroke="#2c2c2e" stroke-width="1.2" opacity="0.7"/>
<rect x="92.55" y="351.75" width="48.5" height="48.5" rx="2" fill="#444446" fill-opacity="0.82" stroke="#5f5f62" stroke-width="1.5"/>
<rect x="91.0" y="408.2" width="51.6" height="51.6" rx="3" fill="none" stroke="#2c2c2e" stroke-width="1.2" opacity="0.7"/>
<rect x="92.55" y="409.75" width="48.5" height="48.5" rx="2" fill="#444446" fill-opacity="0.82" stroke="#5f5f62" stroke-width="1.5"/>
<rect x="91.0" y="466.2" width="51.6" height="51.6" rx="3" fill="none" stroke="#2c2c2e" stroke-width="1.2" opacity="0.7"/>
<rect x="92.55" y="467.75" width="48.5" height="48.5" rx="2" fill="#444446" fill-opacity="0.82" stroke="#5f5f62" stroke-width="1.5"/>
<rect x="91.0" y="524.2" width="51.6" height="51.6" rx="3" fill="none" stroke="#2c2c2e" stroke-width="1.2" opacity="0.7"/>
<rect x="92.55" y="525.75" width="48.5" height="48.5" rx="2" fill="#444446" fill-opacity="0.82" stroke="#78787a" stroke-width="1.5"/>
<rect x="91.0" y="582.2" width="51.6" height="51.6" rx="3" fill="none" stroke="#2c2c2e" stroke-width="1.2" opacity="0.7"/>
<rect x="92.55" y="583.75" width="48.5" height="48.5" rx="2" fill="#444446" fill-opacity="0.82" stroke="#5f5f62" stroke-width="1.5"/>
<rect x="91.0" y="640.2" width="51.6" height="51.6" rx="3" fill="none" stroke="#2c2c2e" stroke-width="1.2" opacity="0.7"/>
<rect x="92.55" y="641.75" width="48.5" height="48.5" rx="2" fill="#444446" fill-opacity="0.82" stroke="#78787a" stroke-width="1.5"/>
<rect x="91.0" y="698.2" width="51.6" height="51.6" rx="3" fill="none" stroke="#2c2c2e" stroke-width="1.2" opacity="0.7"/>
<rect x="92.55" y="699.75" width="48.5" height="48.5" rx="2" fill="#444446" fill-opacity="0.82" stroke="#5f5f62" stroke-width="1.5"/>
<g transform="translate(117.8,301)"><g transform="scale(0.88)"><ellipse cx="11" cy="13" rx="11" ry="5.5" fill="#1c1c1c"/><ellipse cx="14" cy="12" rx="7" ry="3.5" fill="#0c0c0c"/>
<path d="M-16,-8 L-1,-16 L14,-9 L0,-2Z" fill="#c9c9c9"/><path d="M-16,-8 L0,-2 L0,17 L-16,10Z" fill="#9c9c9c"/><path d="M0,-2 L14,-9 L14,9 L0,17Z" fill="#858585"/>
<rect x="-24" y="10" width="23" height="14" fill="#6e6e6e"/><rect x="-24" y="4" width="23" height="7" fill="#8a8a8a"/><path d="M-20,10 L-16,4 L-12,4 L-16,10Z M-10,10 L-6,4 L-2,4 L-6,10Z" fill="#f4f4f4"/></g></g>
<g transform="translate(117.8,376)"><use href="#tee" fill="url(#gWh)" transform="scale(0.95)"/><use href="#eye" transform="translate(-22,11)"/></g>
<g transform="translate(116.8,434)"><ellipse cx="-2" cy="-15" rx="5.5" ry="3.6" fill="url(#gDot)" stroke="#ffd24d" stroke-width="0.8"/><ellipse cx="10" cy="-10" rx="6" ry="4.6" fill="url(#gDot)" stroke="#ffd24d" stroke-width="0.8"/><ellipse cx="13" cy="1" rx="7" ry="7" fill="url(#gDot)" stroke="#ffd24d" stroke-width="0.8"/><ellipse cx="0" cy="11" rx="7.2" ry="7.2" fill="url(#gDot)" stroke="#ffd24d" stroke-width="0.8"/><ellipse cx="-13" cy="4" rx="4.6" ry="6" fill="url(#gDot)" stroke="#ffd24d" stroke-width="0.8"/><ellipse cx="-13" cy="-7" rx="5" ry="3.4" fill="url(#gDot)" stroke="#ffd24d" stroke-width="0.8"/><circle cx="-17" cy="18" r="4" fill="#ff9800"/><circle cx="-17" cy="17" r="2.4" fill="#ffb81a"/></g>
<g transform="translate(116.8,492)"><circle cx="0" cy="-8" r="9.5" fill="url(#gWh)"/><path d="M-3.5,0 L3.5,0 L4,6 Q14,8 16,20 L-16,20 Q-14,8 -4,6Z" fill="url(#gWh)"/><use href="#eye" transform="translate(-22,11)"/></g>
<g transform="translate(116.8,550)"><use href="#fab"/><path d="M-6,-16 Q6,-19 18,-15 Q17,0 11,11 Q1,6 -11,10 Q-5,-4 -6,-16Z" fill="url(#gOr)"/><path d="M22,16 L22,23 L15,23Z" fill="#252525"/></g>
<g transform="translate(116.8,608)"><path d="M-17,-7 L-4,-9 L-6,10 L-13,10Z" fill="#3b3b3b"/><path d="M-12,9 Q0,4 12,8 Q8,15 -2,14 Q-10,13 -12,9Z" fill="#2a2a2a"/><path d="M-5,-15 Q6,-19 17,-15 Q17,0 11,11 Q1,6 -10,10 Q-5,-4 -5,-15Z" fill="url(#gDk)"/></g>
<g transform="translate(116.8,666)"><path d="M-2,-18 Q10,-19 11,-6 Q12,3 5,7 L5,11 Q14,13 16,20 L-15,20 Q-13,13 -6,11 L-6,7 Q-14,2 -13,-7 Q-12,-17 -2,-18Z" fill="url(#gSkin)"/><path d="M22,16 L22,23 L15,23Z" fill="#252525"/></g>
<g transform="translate(116.8,724)"><circle cx="2" cy="-1" r="15.8" fill="url(#gGlobe)"/><g stroke="#c8780a" stroke-width="1.3" fill="none"><ellipse cx="2" cy="-1" rx="6.5" ry="15.8"/><path d="M2,-16.8 L2,14.8 M-13.8,-1 L17.8,-1 M-11.5,-9 Q2,-5.5 15.5,-9 M-11.5,7 Q2,3.5 15.5,7"/></g><use href="#eye" transform="translate(-22,11)"/></g>
<g opacity="0.052" stroke="#000" stroke-width="17" stroke-linecap="round" stroke-linejoin="round" fill="none"><path d="M2314.2,806.2 L2316.2,840.4 L2332.4,876.7 L2356.5,908.9 L2366.6,949.2 L2376.7,981.4 L2388.7,1009.6 L2390.8,1061.9 L2388.7,1102.2 L2380.7,1142.5 L2360.5,1182.7 L2340.4,1223.0 L2332.4,1263.3 L2340.4,1303.6"/><path d="M2388.7,1009.6 L2408.9,1013.6 L2441.1,1045.8"/><path d="M2433.0,967.3 L2439.1,1049.8"/><path d="M2457.2,967.3 L2463.2,1049.8"/><path d="M2481.4,967.3 L2487.4,1049.8"/><path d="M2509.6,967.3 L2515.6,1049.8"/><path d="M2537.8,967.3 L2543.8,1049.8"/><path d="M2553.9,880.7 L2586.1,888.7 L2592.1,921.0 L2590.1,961.2 L2582.1,1005.5 L2561.9,1017.6 L2537.8,1021.6"/><path d="M2582.1,1021.6 L2588.1,1082.1 L2590.1,1122.3 L2578.0,1162.6 L2561.9,1190.8 L2541.8,1223.0 L2505.5,1263.3 L2473.3,1303.6 L2441.1,1343.8 L2421.0,1359.9"/><path d="M2441.1,1114.3 L2412.9,1190.8"/><path d="M2465.3,1134.4 L2441.1,1206.9"/><path d="M2493.5,1142.5 L2469.3,1215.0"/><path d="M2517.6,1142.5 L2497.5,1219.0"/><path d="M2541.8,1142.5 L2517.6,1215.0"/><path d="M2505.5,1198.8 L2561.9,1190.8"/><path d="M2384.7,1154.5 L2412.9,1162.6 L2437.1,1118.3"/><path d="M2372.6,1235.1 L2340.4,1303.6"/><path d="M2400.8,1243.1 L2368.6,1315.6"/><path d="M2429.0,1251.2 L2396.8,1323.7"/><path d="M2457.2,1259.3 L2425.0,1335.8"/><path d="M2481.4,1267.3 L2449.2,1343.8"/></g>
<rect x="2689.5" y="253" width="1.6" height="1557" fill="#8c8c8c"/>
<rect x="2246.1" y="915.3" width="219.2" height="29.7" fill="#073ce9" stroke="#23263a" stroke-width="1.3"/>
<circle cx="2246.1" cy="915.3" r="2.4" fill="#303036"/>
<circle cx="2465.3" cy="915.3" r="2.4" fill="#303036"/>
<circle cx="2246.1" cy="945" r="2.4" fill="#303036"/>
<circle cx="2465.3" cy="945" r="2.4" fill="#303036"/>
<rect x="2073" y="982.7" width="251.4" height="29.7" fill="#073ce9" stroke="#23263a" stroke-width="1.3"/>
<circle cx="2073" cy="982.7" r="2.4" fill="#303036"/>
<circle cx="2324.4" cy="982.7" r="2.4" fill="#303036"/>
<circle cx="2073" cy="1012.4" r="2.4" fill="#303036"/>
<circle cx="2324.4" cy="1012.4" r="2.4" fill="#303036"/>
<rect x="2089.9" y="1047.7" width="309.1" height="29.5" fill="#073ce9" stroke="#23263a" stroke-width="1.3"/>
<circle cx="2089.9" cy="1047.7" r="2.4" fill="#303036"/>
<circle cx="2399" cy="1047.7" r="2.4" fill="#303036"/>
<circle cx="2089.9" cy="1077.2" r="2.4" fill="#303036"/>
<circle cx="2399" cy="1077.2" r="2.4" fill="#303036"/>
<rect x="2089.9" y="1107.7" width="296.3" height="29.5" fill="#073ce9" stroke="#23263a" stroke-width="1.3"/>
<circle cx="2089.9" cy="1107.7" r="2.4" fill="#303036"/>
<circle cx="2386.2" cy="1107.7" r="2.4" fill="#303036"/>
<circle cx="2089.9" cy="1137.2" r="2.4" fill="#303036"/>
<circle cx="2386.2" cy="1137.2" r="2.4" fill="#303036"/>
<rect x="2444.5" y="1107.7" width="296.3" height="29.5" fill="#073ce9" stroke="#23263a" stroke-width="1.3"/>
<circle cx="2444.5" cy="1107.7" r="2.4" fill="#303036"/>
<circle cx="2740.8" cy="1107.7" r="2.4" fill="#303036"/>
<circle cx="2444.5" cy="1137.2" r="2.4" fill="#303036"/>
<circle cx="2740.8" cy="1137.2" r="2.4" fill="#303036"/>
<rect x="2089.9" y="1208" width="374.0" height="29.7" fill="#073ce9" stroke="#23263a" stroke-width="1.3"/>
<circle cx="2089.9" cy="1208" r="2.4" fill="#303036"/>
<circle cx="2463.9" cy="1208" r="2.4" fill="#303036"/>
<circle cx="2089.9" cy="1237.7" r="2.4" fill="#303036"/>
<circle cx="2463.9" cy="1237.7" r="2.4" fill="#303036"/>
<rect x="2071.7" y="1268" width="374.0" height="29.5" fill="#073ce9" stroke="#23263a" stroke-width="1.3"/>
<circle cx="2071.7" cy="1268" r="2.4" fill="#303036"/>
<circle cx="2445.7" cy="1268" r="2.4" fill="#303036"/>
<circle cx="2071.7" cy="1297.5" r="2.4" fill="#303036"/>
<circle cx="2445.7" cy="1297.5" r="2.4" fill="#303036"/>
<rect x="2496" y="1297.7" width="296.4" height="29.8" fill="#073ce9" stroke="#23263a" stroke-width="1.3"/>
<circle cx="2496" cy="1297.7" r="2.4" fill="#303036"/>
<circle cx="2792.4" cy="1297.7" r="2.4" fill="#303036"/>
<circle cx="2496" cy="1327.5" r="2.4" fill="#303036"/>
<circle cx="2792.4" cy="1327.5" r="2.4" fill="#303036"/>
<rect x="2114.4" y="1338.8" width="295.1" height="29.8" fill="#073ce9" stroke="#23263a" stroke-width="1.3"/>
<circle cx="2114.4" cy="1338.8" r="2.4" fill="#303036"/>
<circle cx="2409.5" cy="1338.8" r="2.4" fill="#303036"/>
<circle cx="2114.4" cy="1368.6" r="2.4" fill="#303036"/>
<circle cx="2409.5" cy="1368.6" r="2.4" fill="#303036"/>
<rect x="2081.45" y="274.55" width="50.5" height="50.5" rx="2.5" fill="#e4e4e4" fill-opacity="0.7" stroke="#b2b2b2" stroke-width="1.5"/>
<rect x="2081.45" y="332.35" width="50.5" height="50.5" rx="2.5" fill="#e4e4e4" fill-opacity="0.7" stroke="#b2b2b2" stroke-width="1.5"/>
<rect x="2081.45" y="390.35" width="50.5" height="50.5" rx="2.5" fill="#e4e4e4" fill-opacity="0.7" stroke="#b2b2b2" stroke-width="1.5"/>
<rect x="2081.45" y="448.35" width="50.5" height="50.5" rx="2.5" fill="#e4e4e4" fill-opacity="0.7" stroke="#8e8e8e" stroke-width="1.5"/>
<rect x="2081.45" y="507.15" width="50.5" height="50.5" rx="2.5" fill="#e4e4e4" fill-opacity="0.45" stroke="#b2b2b2" stroke-width="1.5"/>
<g transform="translate(2106.7,299.8)"><path d="M-11,-17 Q-17,-12 -18,-4 Q-19,3 -21,7" stroke="#f0a020" stroke-width="1.6" fill="none"/><path d="M-12,-18 Q-8,-20 -5,-16 L18,8 L15,9 L-9,-9 Q-13,-13 -12,-18Z" fill="#2e2e2e"/><path d="M-9,-16 L-3,-10" stroke="#aaa" stroke-width="1.2"/><use href="#eye" transform="translate(-22,8)"/></g>
<g transform="translate(2107.7,357.6)"><use href="#tee" fill="#fdfdfd" stroke="#dadada" stroke-width="0.8" transform="scale(0.92)"/><use href="#eye" transform="translate(-23,10)"/></g>
<g transform="translate(2106.7,415.6)"><circle cx="2" cy="-1" r="15" fill="#3a3a3a"/><circle cx="5" cy="-10" r="2.3" fill="#ffb31a"/><path d="M-1,-5 L6.5,-6 L4,7 L7,6.5 L7,9 L-1.5,10.5 L1.5,-2.5 L-1.5,-2.2Z" fill="#ffb31a"/><use href="#eye" transform="translate(-23,11)"/></g>
<g transform="translate(2106.7,473.6)"><use href="#fab"/><path d="M-6,-16 Q6,-19 18,-15 Q17,0 11,11 Q1,6 -11,10 Q-5,-4 -6,-16Z" fill="url(#gOr)"/></g>
<g transform="translate(2107.7,532.4)"><use href="#tee" fill="#c3c3c3" transform="scale(0.92)"/><rect x="-19" y="6" width="13" height="12" rx="1" fill="#a9a9a9"/><path d="M-16,6 L-16,1 Q-12.5,-4 -9,1 L-9,6" stroke="#a9a9a9" stroke-width="2.2" fill="none"/><rect x="-13.5" y="10" width="2" height="4" fill="#d8d8d8"/></g>
<!--/PATTERN-->
</svg>
</body>
</html>
